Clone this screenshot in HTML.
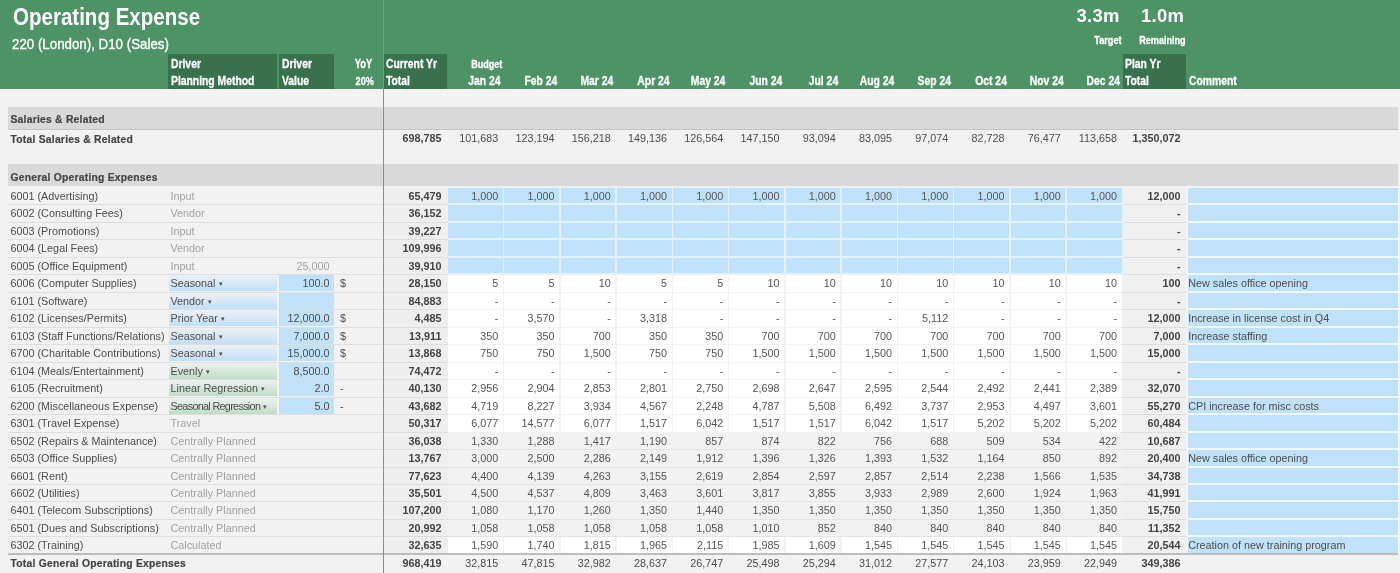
<!DOCTYPE html>
<html><head><meta charset="utf-8"><style>
html,body{margin:0;padding:0;}
body{width:1400px;height:573px;overflow:hidden;position:relative;background:#f1f2f1;font-family:"Liberation Sans",sans-serif;}
body>div{position:absolute;}
body{will-change:transform;}
.t{font-size:10.8px;color:#4d4d4d;white-space:nowrap;}
.b{font-weight:bold;color:#444;}
.bl{font-size:10.3px;letter-spacing:0.25px;}
.g{color:#a2a2a2;}
.m{color:#555;}
.h{font-weight:bold;color:#fff;white-space:nowrap;}
.hn{color:#fff;white-space:nowrap;}
.hs{-webkit-text-stroke:0.3px #fff;}
.bl{-webkit-text-stroke:0.2px #444;}
.dd{font-size:7px;vertical-align:1px;margin-left:3px;}
</style></head><body>
<div style="left:0.00px;top:0.00px;width:1400.00px;height:89.00px;background:#4d9365"></div>
<div style="left:168.00px;top:54.00px;width:109.00px;height:34.50px;background:#38714b"></div>
<div style="left:279.00px;top:54.00px;width:54.50px;height:34.50px;background:#38714b"></div>
<div style="left:384.00px;top:54.00px;width:63.00px;height:34.50px;background:#38714b"></div>
<div style="left:1122.50px;top:54.00px;width:63.50px;height:34.50px;background:#38714b"></div>
<div class="h" style="left:13px;top:0px;font-size:23.3px;line-height:34px;transform:scaleX(0.881);transform-origin:0 0">Operating Expense</div>
<div class="hn" style="left:12px;top:34px;font-size:14.4px;line-height:20px;-webkit-text-stroke:0.35px #fff;transform:scaleX(0.925);transform-origin:0 0">220 (London), D10 (Sales)</div>
<div class="h" style="left:1076.5px;top:3.5px;font-size:18.4px;line-height:24px;letter-spacing:0.3px">3.3m</div>
<div class="h" style="left:1141px;top:3.5px;font-size:18.4px;line-height:24px;letter-spacing:0.3px">1.0m</div>
<div class="h hs" style="right:279px;top:31.7px;font-size:10.9px;line-height:16px;transform:scaleX(0.835);transform-origin:100% 0">Target</div>
<div class="h hs" style="right:214.5px;top:31.7px;font-size:10.9px;line-height:16px;transform:scaleX(0.835);transform-origin:100% 0">Remaining</div>
<div class="h hs" style="left:171px;top:56px;font-size:12.4px;line-height:16px;transform:scaleX(0.835);transform-origin:0 0">Driver</div>
<div class="h hs" style="left:171px;top:73px;font-size:12.4px;line-height:16px;transform:scaleX(0.835);transform-origin:0 0">Planning Method</div>
<div class="h hs" style="left:281.5px;top:56px;font-size:12.4px;line-height:16px;transform:scaleX(0.835);transform-origin:0 0">Driver</div>
<div class="h hs" style="left:281.5px;top:73px;font-size:12.4px;line-height:16px;transform:scaleX(0.835);transform-origin:0 0">Value</div>
<div class="h hs" style="right:1028px;top:56px;font-size:12.4px;line-height:16px;transform:scaleX(0.75);transform-origin:100% 0">YoY</div>
<div class="h hs" style="right:1026.5px;top:73px;font-size:10.9px;line-height:16px;transform:scaleX(0.835);transform-origin:100% 0">20%</div>
<div class="h hs" style="left:386px;top:56px;font-size:12.4px;line-height:16px;transform:scaleX(0.835);transform-origin:0 0">Current Yr</div>
<div class="h hs" style="left:386px;top:73px;font-size:12.4px;line-height:16px;transform:scaleX(0.835);transform-origin:0 0">Total</div>
<div class="h hs" style="right:897.5px;top:55.5px;font-size:10.8px;line-height:16px;transform:scaleX(0.835);transform-origin:100% 0">Budget</div>
<div class="h hs" style="right:899.25px;top:73px;font-size:12.4px;line-height:16px;transform:scaleX(0.835);transform-origin:100% 0">Jan 24</div>
<div class="h hs" style="right:843.0px;top:73px;font-size:12.4px;line-height:16px;transform:scaleX(0.835);transform-origin:100% 0">Feb 24</div>
<div class="h hs" style="right:786.75px;top:73px;font-size:12.4px;line-height:16px;transform:scaleX(0.835);transform-origin:100% 0">Mar 24</div>
<div class="h hs" style="right:730.5px;top:73px;font-size:12.4px;line-height:16px;transform:scaleX(0.835);transform-origin:100% 0">Apr 24</div>
<div class="h hs" style="right:674.25px;top:73px;font-size:12.4px;line-height:16px;transform:scaleX(0.835);transform-origin:100% 0">May 24</div>
<div class="h hs" style="right:618.0px;top:73px;font-size:12.4px;line-height:16px;transform:scaleX(0.835);transform-origin:100% 0">Jun 24</div>
<div class="h hs" style="right:561.75px;top:73px;font-size:12.4px;line-height:16px;transform:scaleX(0.835);transform-origin:100% 0">Jul 24</div>
<div class="h hs" style="right:505.5px;top:73px;font-size:12.4px;line-height:16px;transform:scaleX(0.835);transform-origin:100% 0">Aug 24</div>
<div class="h hs" style="right:449.25px;top:73px;font-size:12.4px;line-height:16px;transform:scaleX(0.835);transform-origin:100% 0">Sep 24</div>
<div class="h hs" style="right:393.0px;top:73px;font-size:12.4px;line-height:16px;transform:scaleX(0.835);transform-origin:100% 0">Oct 24</div>
<div class="h hs" style="right:336.75px;top:73px;font-size:12.4px;line-height:16px;transform:scaleX(0.835);transform-origin:100% 0">Nov 24</div>
<div class="h hs" style="right:280.5px;top:73px;font-size:12.4px;line-height:16px;transform:scaleX(0.835);transform-origin:100% 0">Dec 24</div>
<div class="h hs" style="left:1125px;top:56px;font-size:12.4px;line-height:16px;transform:scaleX(0.835);transform-origin:0 0">Plan Yr</div>
<div class="h hs" style="left:1125px;top:73px;font-size:12.4px;line-height:16px;transform:scaleX(0.835);transform-origin:0 0">Total</div>
<div class="h hs" style="left:1189px;top:73px;font-size:12.4px;line-height:16px;transform:scaleX(0.835);transform-origin:0 0">Comment</div>
<div style="left:8.00px;top:107.00px;width:1390.00px;height:22.00px;background:#d9d9d9;border-bottom:1px solid #c4c4c4"></div>
<div class="t b bl" style="left:10.50px;top:108.50px;width:300.00px;height:22.00px;line-height:22.00px;text-align:left;">Salaries &amp; Related</div>
<div class="t b bl" style="left:10.50px;top:130.70px;width:300.00px;height:17.50px;line-height:17.50px;text-align:left;">Total Salaries &amp; Related</div>
<div class="t b" style="left:384.00px;top:130.00px;width:57.50px;height:17.50px;line-height:17.50px;text-align:right;">698,785</div>
<div class="t " style="left:448.00px;top:130.00px;width:50.25px;height:17.50px;line-height:17.50px;text-align:right;">101,683</div>
<div class="t " style="left:504.25px;top:130.00px;width:50.25px;height:17.50px;line-height:17.50px;text-align:right;">123,194</div>
<div class="t " style="left:560.50px;top:130.00px;width:50.25px;height:17.50px;line-height:17.50px;text-align:right;">156,218</div>
<div class="t " style="left:616.75px;top:130.00px;width:50.25px;height:17.50px;line-height:17.50px;text-align:right;">149,136</div>
<div class="t " style="left:673.00px;top:130.00px;width:50.25px;height:17.50px;line-height:17.50px;text-align:right;">126,564</div>
<div class="t " style="left:729.25px;top:130.00px;width:50.25px;height:17.50px;line-height:17.50px;text-align:right;">147,150</div>
<div class="t " style="left:785.50px;top:130.00px;width:50.25px;height:17.50px;line-height:17.50px;text-align:right;">93,094</div>
<div class="t " style="left:841.75px;top:130.00px;width:50.25px;height:17.50px;line-height:17.50px;text-align:right;">83,095</div>
<div class="t " style="left:898.00px;top:130.00px;width:50.25px;height:17.50px;line-height:17.50px;text-align:right;">97,074</div>
<div class="t " style="left:954.25px;top:130.00px;width:50.25px;height:17.50px;line-height:17.50px;text-align:right;">82,728</div>
<div class="t " style="left:1010.50px;top:130.00px;width:50.25px;height:17.50px;line-height:17.50px;text-align:right;">76,477</div>
<div class="t " style="left:1066.75px;top:130.00px;width:50.25px;height:17.50px;line-height:17.50px;text-align:right;">113,658</div>
<div class="t b" style="left:1121.00px;top:130.00px;width:59.50px;height:17.50px;line-height:17.50px;text-align:right;">1,350,072</div>
<div style="left:8.00px;top:164.00px;width:1390.00px;height:22.00px;background:#d9d9d9"></div>
<div class="t b bl" style="left:10.50px;top:166.70px;width:300.00px;height:22.00px;line-height:22.00px;text-align:left;">General Operating Expenses</div>
<div style="left:8.00px;top:204.47px;width:375.00px;height:1.00px;background:#dedede"></div>
<div style="left:384.00px;top:188.00px;width:63.50px;height:16.47px;background:#eeeeee"></div>
<div style="left:384.00px;top:204.47px;width:63.50px;height:1.00px;background:#dedede"></div>
<div style="left:1121.00px;top:188.00px;width:65.00px;height:16.47px;background:#f0f0f0"></div>
<div style="left:1121.00px;top:204.47px;width:66.00px;height:1.00px;background:#dedede"></div>
<div style="left:448.00px;top:187.00px;width:675.00px;height:18.47px;background:#e4f2fd"></div>
<div style="left:1186.50px;top:187.00px;width:212.00px;height:18.47px;background:#f2f9fe"></div>
<div style="left:448.00px;top:188.00px;width:54.75px;height:15.47px;background:#c0e1fa"></div>
<div class="t m" style="left:448.00px;top:188.00px;width:50.25px;height:17.47px;line-height:17.47px;text-align:right;">1,000</div>
<div style="left:504.25px;top:188.00px;width:54.75px;height:15.47px;background:#c0e1fa"></div>
<div class="t m" style="left:504.25px;top:188.00px;width:50.25px;height:17.47px;line-height:17.47px;text-align:right;">1,000</div>
<div style="left:560.50px;top:188.00px;width:54.75px;height:15.47px;background:#c0e1fa"></div>
<div class="t m" style="left:560.50px;top:188.00px;width:50.25px;height:17.47px;line-height:17.47px;text-align:right;">1,000</div>
<div style="left:616.75px;top:188.00px;width:54.75px;height:15.47px;background:#c0e1fa"></div>
<div class="t m" style="left:616.75px;top:188.00px;width:50.25px;height:17.47px;line-height:17.47px;text-align:right;">1,000</div>
<div style="left:673.00px;top:188.00px;width:54.75px;height:15.47px;background:#c0e1fa"></div>
<div class="t m" style="left:673.00px;top:188.00px;width:50.25px;height:17.47px;line-height:17.47px;text-align:right;">1,000</div>
<div style="left:729.25px;top:188.00px;width:54.75px;height:15.47px;background:#c0e1fa"></div>
<div class="t m" style="left:729.25px;top:188.00px;width:50.25px;height:17.47px;line-height:17.47px;text-align:right;">1,000</div>
<div style="left:785.50px;top:188.00px;width:54.75px;height:15.47px;background:#c0e1fa"></div>
<div class="t m" style="left:785.50px;top:188.00px;width:50.25px;height:17.47px;line-height:17.47px;text-align:right;">1,000</div>
<div style="left:841.75px;top:188.00px;width:54.75px;height:15.47px;background:#c0e1fa"></div>
<div class="t m" style="left:841.75px;top:188.00px;width:50.25px;height:17.47px;line-height:17.47px;text-align:right;">1,000</div>
<div style="left:898.00px;top:188.00px;width:54.75px;height:15.47px;background:#c0e1fa"></div>
<div class="t m" style="left:898.00px;top:188.00px;width:50.25px;height:17.47px;line-height:17.47px;text-align:right;">1,000</div>
<div style="left:954.25px;top:188.00px;width:54.75px;height:15.47px;background:#c0e1fa"></div>
<div class="t m" style="left:954.25px;top:188.00px;width:50.25px;height:17.47px;line-height:17.47px;text-align:right;">1,000</div>
<div style="left:1010.50px;top:188.00px;width:54.75px;height:15.47px;background:#c0e1fa"></div>
<div class="t m" style="left:1010.50px;top:188.00px;width:50.25px;height:17.47px;line-height:17.47px;text-align:right;">1,000</div>
<div style="left:1066.75px;top:188.00px;width:54.75px;height:15.47px;background:#c0e1fa"></div>
<div class="t m" style="left:1066.75px;top:188.00px;width:50.25px;height:17.47px;line-height:17.47px;text-align:right;">1,000</div>
<div style="left:1187.50px;top:188.00px;width:210.50px;height:15.47px;background:#c0e1fa"></div>
<div class="t " style="left:10.50px;top:188.00px;width:160.00px;height:17.47px;line-height:17.47px;text-align:left;">6001 (Advertising)</div>
<div class="t g" style="left:170.50px;top:188.00px;width:108.00px;height:17.47px;line-height:17.47px;text-align:left;">Input</div>
<div class="t b" style="left:384.00px;top:188.00px;width:57.50px;height:17.47px;line-height:17.47px;text-align:right;">65,479</div>
<div class="t b" style="left:1121.00px;top:188.00px;width:59.50px;height:17.47px;line-height:17.47px;text-align:right;">12,000</div>
<div style="left:8.00px;top:221.94px;width:375.00px;height:1.00px;background:#dedede"></div>
<div style="left:384.00px;top:205.47px;width:63.50px;height:16.47px;background:#eeeeee"></div>
<div style="left:384.00px;top:221.94px;width:63.50px;height:1.00px;background:#dedede"></div>
<div style="left:1121.00px;top:205.47px;width:65.00px;height:16.47px;background:#f0f0f0"></div>
<div style="left:1121.00px;top:221.94px;width:66.00px;height:1.00px;background:#dedede"></div>
<div style="left:448.00px;top:204.47px;width:675.00px;height:18.47px;background:#e4f2fd"></div>
<div style="left:1186.50px;top:204.47px;width:212.00px;height:18.47px;background:#f2f9fe"></div>
<div style="left:448.00px;top:205.47px;width:54.75px;height:15.47px;background:#c0e1fa"></div>
<div style="left:504.25px;top:205.47px;width:54.75px;height:15.47px;background:#c0e1fa"></div>
<div style="left:560.50px;top:205.47px;width:54.75px;height:15.47px;background:#c0e1fa"></div>
<div style="left:616.75px;top:205.47px;width:54.75px;height:15.47px;background:#c0e1fa"></div>
<div style="left:673.00px;top:205.47px;width:54.75px;height:15.47px;background:#c0e1fa"></div>
<div style="left:729.25px;top:205.47px;width:54.75px;height:15.47px;background:#c0e1fa"></div>
<div style="left:785.50px;top:205.47px;width:54.75px;height:15.47px;background:#c0e1fa"></div>
<div style="left:841.75px;top:205.47px;width:54.75px;height:15.47px;background:#c0e1fa"></div>
<div style="left:898.00px;top:205.47px;width:54.75px;height:15.47px;background:#c0e1fa"></div>
<div style="left:954.25px;top:205.47px;width:54.75px;height:15.47px;background:#c0e1fa"></div>
<div style="left:1010.50px;top:205.47px;width:54.75px;height:15.47px;background:#c0e1fa"></div>
<div style="left:1066.75px;top:205.47px;width:54.75px;height:15.47px;background:#c0e1fa"></div>
<div style="left:1187.50px;top:205.47px;width:210.50px;height:15.47px;background:#c0e1fa"></div>
<div class="t " style="left:10.50px;top:205.47px;width:160.00px;height:17.47px;line-height:17.47px;text-align:left;">6002 (Consulting Fees)</div>
<div class="t g" style="left:170.50px;top:205.47px;width:108.00px;height:17.47px;line-height:17.47px;text-align:left;">Vendor</div>
<div class="t b" style="left:384.00px;top:205.47px;width:57.50px;height:17.47px;line-height:17.47px;text-align:right;">36,152</div>
<div class="t b" style="left:1121.00px;top:205.47px;width:59.50px;height:17.47px;line-height:17.47px;text-align:right;">-</div>
<div style="left:8.00px;top:239.41px;width:375.00px;height:1.00px;background:#dedede"></div>
<div style="left:384.00px;top:222.94px;width:63.50px;height:16.47px;background:#eeeeee"></div>
<div style="left:384.00px;top:239.41px;width:63.50px;height:1.00px;background:#dedede"></div>
<div style="left:1121.00px;top:222.94px;width:65.00px;height:16.47px;background:#f0f0f0"></div>
<div style="left:1121.00px;top:239.41px;width:66.00px;height:1.00px;background:#dedede"></div>
<div style="left:448.00px;top:221.94px;width:675.00px;height:18.47px;background:#e4f2fd"></div>
<div style="left:1186.50px;top:221.94px;width:212.00px;height:18.47px;background:#f2f9fe"></div>
<div style="left:448.00px;top:222.94px;width:54.75px;height:15.47px;background:#c0e1fa"></div>
<div style="left:504.25px;top:222.94px;width:54.75px;height:15.47px;background:#c0e1fa"></div>
<div style="left:560.50px;top:222.94px;width:54.75px;height:15.47px;background:#c0e1fa"></div>
<div style="left:616.75px;top:222.94px;width:54.75px;height:15.47px;background:#c0e1fa"></div>
<div style="left:673.00px;top:222.94px;width:54.75px;height:15.47px;background:#c0e1fa"></div>
<div style="left:729.25px;top:222.94px;width:54.75px;height:15.47px;background:#c0e1fa"></div>
<div style="left:785.50px;top:222.94px;width:54.75px;height:15.47px;background:#c0e1fa"></div>
<div style="left:841.75px;top:222.94px;width:54.75px;height:15.47px;background:#c0e1fa"></div>
<div style="left:898.00px;top:222.94px;width:54.75px;height:15.47px;background:#c0e1fa"></div>
<div style="left:954.25px;top:222.94px;width:54.75px;height:15.47px;background:#c0e1fa"></div>
<div style="left:1010.50px;top:222.94px;width:54.75px;height:15.47px;background:#c0e1fa"></div>
<div style="left:1066.75px;top:222.94px;width:54.75px;height:15.47px;background:#c0e1fa"></div>
<div style="left:1187.50px;top:222.94px;width:210.50px;height:15.47px;background:#c0e1fa"></div>
<div class="t " style="left:10.50px;top:222.94px;width:160.00px;height:17.47px;line-height:17.47px;text-align:left;">6003 (Promotions)</div>
<div class="t g" style="left:170.50px;top:222.94px;width:108.00px;height:17.47px;line-height:17.47px;text-align:left;">Input</div>
<div class="t b" style="left:384.00px;top:222.94px;width:57.50px;height:17.47px;line-height:17.47px;text-align:right;">39,227</div>
<div class="t b" style="left:1121.00px;top:222.94px;width:59.50px;height:17.47px;line-height:17.47px;text-align:right;">-</div>
<div style="left:8.00px;top:256.88px;width:375.00px;height:1.00px;background:#dedede"></div>
<div style="left:384.00px;top:240.41px;width:63.50px;height:16.47px;background:#eeeeee"></div>
<div style="left:384.00px;top:256.88px;width:63.50px;height:1.00px;background:#dedede"></div>
<div style="left:1121.00px;top:240.41px;width:65.00px;height:16.47px;background:#f0f0f0"></div>
<div style="left:1121.00px;top:256.88px;width:66.00px;height:1.00px;background:#dedede"></div>
<div style="left:448.00px;top:239.41px;width:675.00px;height:18.47px;background:#e4f2fd"></div>
<div style="left:1186.50px;top:239.41px;width:212.00px;height:18.47px;background:#f2f9fe"></div>
<div style="left:448.00px;top:240.41px;width:54.75px;height:15.47px;background:#c0e1fa"></div>
<div style="left:504.25px;top:240.41px;width:54.75px;height:15.47px;background:#c0e1fa"></div>
<div style="left:560.50px;top:240.41px;width:54.75px;height:15.47px;background:#c0e1fa"></div>
<div style="left:616.75px;top:240.41px;width:54.75px;height:15.47px;background:#c0e1fa"></div>
<div style="left:673.00px;top:240.41px;width:54.75px;height:15.47px;background:#c0e1fa"></div>
<div style="left:729.25px;top:240.41px;width:54.75px;height:15.47px;background:#c0e1fa"></div>
<div style="left:785.50px;top:240.41px;width:54.75px;height:15.47px;background:#c0e1fa"></div>
<div style="left:841.75px;top:240.41px;width:54.75px;height:15.47px;background:#c0e1fa"></div>
<div style="left:898.00px;top:240.41px;width:54.75px;height:15.47px;background:#c0e1fa"></div>
<div style="left:954.25px;top:240.41px;width:54.75px;height:15.47px;background:#c0e1fa"></div>
<div style="left:1010.50px;top:240.41px;width:54.75px;height:15.47px;background:#c0e1fa"></div>
<div style="left:1066.75px;top:240.41px;width:54.75px;height:15.47px;background:#c0e1fa"></div>
<div style="left:1187.50px;top:240.41px;width:210.50px;height:15.47px;background:#c0e1fa"></div>
<div class="t " style="left:10.50px;top:240.41px;width:160.00px;height:17.47px;line-height:17.47px;text-align:left;">6004 (Legal Fees)</div>
<div class="t g" style="left:170.50px;top:240.41px;width:108.00px;height:17.47px;line-height:17.47px;text-align:left;">Vendor</div>
<div class="t b" style="left:384.00px;top:240.41px;width:57.50px;height:17.47px;line-height:17.47px;text-align:right;">109,996</div>
<div class="t b" style="left:1121.00px;top:240.41px;width:59.50px;height:17.47px;line-height:17.47px;text-align:right;">-</div>
<div style="left:8.00px;top:274.35px;width:375.00px;height:1.00px;background:#dedede"></div>
<div style="left:384.00px;top:257.88px;width:63.50px;height:16.47px;background:#eeeeee"></div>
<div style="left:384.00px;top:274.35px;width:63.50px;height:1.00px;background:#dedede"></div>
<div style="left:1121.00px;top:257.88px;width:65.00px;height:16.47px;background:#f0f0f0"></div>
<div style="left:1121.00px;top:274.35px;width:66.00px;height:1.00px;background:#dedede"></div>
<div style="left:448.00px;top:256.88px;width:675.00px;height:18.47px;background:#e4f2fd"></div>
<div style="left:1186.50px;top:256.88px;width:212.00px;height:18.47px;background:#f2f9fe"></div>
<div style="left:448.00px;top:257.88px;width:54.75px;height:15.47px;background:#c0e1fa"></div>
<div style="left:504.25px;top:257.88px;width:54.75px;height:15.47px;background:#c0e1fa"></div>
<div style="left:560.50px;top:257.88px;width:54.75px;height:15.47px;background:#c0e1fa"></div>
<div style="left:616.75px;top:257.88px;width:54.75px;height:15.47px;background:#c0e1fa"></div>
<div style="left:673.00px;top:257.88px;width:54.75px;height:15.47px;background:#c0e1fa"></div>
<div style="left:729.25px;top:257.88px;width:54.75px;height:15.47px;background:#c0e1fa"></div>
<div style="left:785.50px;top:257.88px;width:54.75px;height:15.47px;background:#c0e1fa"></div>
<div style="left:841.75px;top:257.88px;width:54.75px;height:15.47px;background:#c0e1fa"></div>
<div style="left:898.00px;top:257.88px;width:54.75px;height:15.47px;background:#c0e1fa"></div>
<div style="left:954.25px;top:257.88px;width:54.75px;height:15.47px;background:#c0e1fa"></div>
<div style="left:1010.50px;top:257.88px;width:54.75px;height:15.47px;background:#c0e1fa"></div>
<div style="left:1066.75px;top:257.88px;width:54.75px;height:15.47px;background:#c0e1fa"></div>
<div style="left:1187.50px;top:257.88px;width:210.50px;height:15.47px;background:#c0e1fa"></div>
<div class="t " style="left:10.50px;top:257.88px;width:160.00px;height:17.47px;line-height:17.47px;text-align:left;">6005 (Office Equipment)</div>
<div class="t g" style="left:170.50px;top:257.88px;width:108.00px;height:17.47px;line-height:17.47px;text-align:left;">Input</div>
<div class="t g" style="left:279.00px;top:257.88px;width:50.50px;height:17.47px;line-height:17.47px;text-align:right;">25,000</div>
<div class="t b" style="left:384.00px;top:257.88px;width:57.50px;height:17.47px;line-height:17.47px;text-align:right;">39,910</div>
<div class="t b" style="left:1121.00px;top:257.88px;width:59.50px;height:17.47px;line-height:17.47px;text-align:right;">-</div>
<div style="left:8.00px;top:291.82px;width:375.00px;height:1.00px;background:#dedede"></div>
<div style="left:384.00px;top:275.35px;width:63.50px;height:16.47px;background:#eeeeee"></div>
<div style="left:384.00px;top:291.82px;width:63.50px;height:1.00px;background:#dedede"></div>
<div style="left:1121.00px;top:275.35px;width:65.00px;height:16.47px;background:#f0f0f0"></div>
<div style="left:1121.00px;top:291.82px;width:66.00px;height:1.00px;background:#dedede"></div>
<div style="left:1186.50px;top:274.35px;width:212.00px;height:18.47px;background:#f2f9fe"></div>
<div style="left:448.00px;top:275.35px;width:54.75px;height:16.47px;background:#ffffff"></div>
<div class="t m" style="left:448.00px;top:275.35px;width:50.25px;height:17.47px;line-height:17.47px;text-align:right;">5</div>
<div style="left:504.25px;top:275.35px;width:54.75px;height:16.47px;background:#ffffff"></div>
<div class="t m" style="left:504.25px;top:275.35px;width:50.25px;height:17.47px;line-height:17.47px;text-align:right;">5</div>
<div style="left:560.50px;top:275.35px;width:54.75px;height:16.47px;background:#ffffff"></div>
<div class="t m" style="left:560.50px;top:275.35px;width:50.25px;height:17.47px;line-height:17.47px;text-align:right;">10</div>
<div style="left:616.75px;top:275.35px;width:54.75px;height:16.47px;background:#ffffff"></div>
<div class="t m" style="left:616.75px;top:275.35px;width:50.25px;height:17.47px;line-height:17.47px;text-align:right;">5</div>
<div style="left:673.00px;top:275.35px;width:54.75px;height:16.47px;background:#ffffff"></div>
<div class="t m" style="left:673.00px;top:275.35px;width:50.25px;height:17.47px;line-height:17.47px;text-align:right;">5</div>
<div style="left:729.25px;top:275.35px;width:54.75px;height:16.47px;background:#ffffff"></div>
<div class="t m" style="left:729.25px;top:275.35px;width:50.25px;height:17.47px;line-height:17.47px;text-align:right;">10</div>
<div style="left:785.50px;top:275.35px;width:54.75px;height:16.47px;background:#ffffff"></div>
<div class="t m" style="left:785.50px;top:275.35px;width:50.25px;height:17.47px;line-height:17.47px;text-align:right;">10</div>
<div style="left:841.75px;top:275.35px;width:54.75px;height:16.47px;background:#ffffff"></div>
<div class="t m" style="left:841.75px;top:275.35px;width:50.25px;height:17.47px;line-height:17.47px;text-align:right;">10</div>
<div style="left:898.00px;top:275.35px;width:54.75px;height:16.47px;background:#ffffff"></div>
<div class="t m" style="left:898.00px;top:275.35px;width:50.25px;height:17.47px;line-height:17.47px;text-align:right;">10</div>
<div style="left:954.25px;top:275.35px;width:54.75px;height:16.47px;background:#ffffff"></div>
<div class="t m" style="left:954.25px;top:275.35px;width:50.25px;height:17.47px;line-height:17.47px;text-align:right;">10</div>
<div style="left:1010.50px;top:275.35px;width:54.75px;height:16.47px;background:#ffffff"></div>
<div class="t m" style="left:1010.50px;top:275.35px;width:50.25px;height:17.47px;line-height:17.47px;text-align:right;">10</div>
<div style="left:1066.75px;top:275.35px;width:54.75px;height:16.47px;background:#ffffff"></div>
<div class="t m" style="left:1066.75px;top:275.35px;width:50.25px;height:17.47px;line-height:17.47px;text-align:right;">10</div>
<div style="left:1187.50px;top:275.35px;width:210.50px;height:15.47px;background:#c0e1fa"></div>
<div class="t " style="left:1188.20px;top:275.35px;width:210.00px;height:17.47px;line-height:17.47px;text-align:left;">New sales office opening</div>
<div style="left:168.50px;top:275.35px;width:108.50px;height:15.97px;background:linear-gradient(#edf1f4,#c0dff8)"></div>
<div style="left:279.00px;top:275.35px;width:54.50px;height:15.97px;background:#c0e1fa"></div>
<div class="t " style="left:10.50px;top:275.35px;width:160.00px;height:17.47px;line-height:17.47px;text-align:left;">6006 (Computer Supplies)</div>
<div class="t " style="left:170.50px;top:275.35px;width:108.00px;height:17.47px;line-height:17.47px;text-align:left;">Seasonal<span class="dd">&#9662;</span></div>
<div class="t " style="left:279.00px;top:275.35px;width:50.50px;height:17.47px;line-height:17.47px;text-align:right;">100.0</div>
<div class="t " style="left:340.00px;top:275.35px;width:30.00px;height:17.47px;line-height:17.47px;text-align:left;">$</div>
<div class="t b" style="left:384.00px;top:275.35px;width:57.50px;height:17.47px;line-height:17.47px;text-align:right;">28,150</div>
<div class="t b" style="left:1121.00px;top:275.35px;width:59.50px;height:17.47px;line-height:17.47px;text-align:right;">100</div>
<div style="left:8.00px;top:309.29px;width:375.00px;height:1.00px;background:#dedede"></div>
<div style="left:384.00px;top:292.82px;width:63.50px;height:16.47px;background:#eeeeee"></div>
<div style="left:384.00px;top:309.29px;width:63.50px;height:1.00px;background:#dedede"></div>
<div style="left:1121.00px;top:292.82px;width:65.00px;height:16.47px;background:#f0f0f0"></div>
<div style="left:1121.00px;top:309.29px;width:66.00px;height:1.00px;background:#dedede"></div>
<div style="left:1186.50px;top:291.82px;width:212.00px;height:18.47px;background:#f2f9fe"></div>
<div style="left:448.00px;top:292.82px;width:54.75px;height:16.47px;background:#ffffff"></div>
<div class="t m" style="left:448.00px;top:292.82px;width:50.25px;height:17.47px;line-height:17.47px;text-align:right;">-</div>
<div style="left:504.25px;top:292.82px;width:54.75px;height:16.47px;background:#ffffff"></div>
<div class="t m" style="left:504.25px;top:292.82px;width:50.25px;height:17.47px;line-height:17.47px;text-align:right;">-</div>
<div style="left:560.50px;top:292.82px;width:54.75px;height:16.47px;background:#ffffff"></div>
<div class="t m" style="left:560.50px;top:292.82px;width:50.25px;height:17.47px;line-height:17.47px;text-align:right;">-</div>
<div style="left:616.75px;top:292.82px;width:54.75px;height:16.47px;background:#ffffff"></div>
<div class="t m" style="left:616.75px;top:292.82px;width:50.25px;height:17.47px;line-height:17.47px;text-align:right;">-</div>
<div style="left:673.00px;top:292.82px;width:54.75px;height:16.47px;background:#ffffff"></div>
<div class="t m" style="left:673.00px;top:292.82px;width:50.25px;height:17.47px;line-height:17.47px;text-align:right;">-</div>
<div style="left:729.25px;top:292.82px;width:54.75px;height:16.47px;background:#ffffff"></div>
<div class="t m" style="left:729.25px;top:292.82px;width:50.25px;height:17.47px;line-height:17.47px;text-align:right;">-</div>
<div style="left:785.50px;top:292.82px;width:54.75px;height:16.47px;background:#ffffff"></div>
<div class="t m" style="left:785.50px;top:292.82px;width:50.25px;height:17.47px;line-height:17.47px;text-align:right;">-</div>
<div style="left:841.75px;top:292.82px;width:54.75px;height:16.47px;background:#ffffff"></div>
<div class="t m" style="left:841.75px;top:292.82px;width:50.25px;height:17.47px;line-height:17.47px;text-align:right;">-</div>
<div style="left:898.00px;top:292.82px;width:54.75px;height:16.47px;background:#ffffff"></div>
<div class="t m" style="left:898.00px;top:292.82px;width:50.25px;height:17.47px;line-height:17.47px;text-align:right;">-</div>
<div style="left:954.25px;top:292.82px;width:54.75px;height:16.47px;background:#ffffff"></div>
<div class="t m" style="left:954.25px;top:292.82px;width:50.25px;height:17.47px;line-height:17.47px;text-align:right;">-</div>
<div style="left:1010.50px;top:292.82px;width:54.75px;height:16.47px;background:#ffffff"></div>
<div class="t m" style="left:1010.50px;top:292.82px;width:50.25px;height:17.47px;line-height:17.47px;text-align:right;">-</div>
<div style="left:1066.75px;top:292.82px;width:54.75px;height:16.47px;background:#ffffff"></div>
<div class="t m" style="left:1066.75px;top:292.82px;width:50.25px;height:17.47px;line-height:17.47px;text-align:right;">-</div>
<div style="left:1187.50px;top:292.82px;width:210.50px;height:15.47px;background:#c0e1fa"></div>
<div style="left:168.50px;top:292.82px;width:108.50px;height:15.97px;background:linear-gradient(#edf1f4,#c0dff8)"></div>
<div style="left:279.00px;top:292.82px;width:54.50px;height:15.97px;background:#c0e1fa"></div>
<div class="t " style="left:10.50px;top:292.82px;width:160.00px;height:17.47px;line-height:17.47px;text-align:left;">6101 (Software)</div>
<div class="t " style="left:170.50px;top:292.82px;width:108.00px;height:17.47px;line-height:17.47px;text-align:left;">Vendor<span class="dd">&#9662;</span></div>
<div class="t b" style="left:384.00px;top:292.82px;width:57.50px;height:17.47px;line-height:17.47px;text-align:right;">84,883</div>
<div class="t b" style="left:1121.00px;top:292.82px;width:59.50px;height:17.47px;line-height:17.47px;text-align:right;">-</div>
<div style="left:8.00px;top:326.76px;width:375.00px;height:1.00px;background:#dedede"></div>
<div style="left:384.00px;top:310.29px;width:63.50px;height:16.47px;background:#eeeeee"></div>
<div style="left:384.00px;top:326.76px;width:63.50px;height:1.00px;background:#dedede"></div>
<div style="left:1121.00px;top:310.29px;width:65.00px;height:16.47px;background:#f0f0f0"></div>
<div style="left:1121.00px;top:326.76px;width:66.00px;height:1.00px;background:#dedede"></div>
<div style="left:1186.50px;top:309.29px;width:212.00px;height:18.47px;background:#f2f9fe"></div>
<div style="left:448.00px;top:310.29px;width:54.75px;height:16.47px;background:#ffffff"></div>
<div class="t m" style="left:448.00px;top:310.29px;width:50.25px;height:17.47px;line-height:17.47px;text-align:right;">-</div>
<div style="left:504.25px;top:310.29px;width:54.75px;height:16.47px;background:#ffffff"></div>
<div class="t m" style="left:504.25px;top:310.29px;width:50.25px;height:17.47px;line-height:17.47px;text-align:right;">3,570</div>
<div style="left:560.50px;top:310.29px;width:54.75px;height:16.47px;background:#ffffff"></div>
<div class="t m" style="left:560.50px;top:310.29px;width:50.25px;height:17.47px;line-height:17.47px;text-align:right;">-</div>
<div style="left:616.75px;top:310.29px;width:54.75px;height:16.47px;background:#ffffff"></div>
<div class="t m" style="left:616.75px;top:310.29px;width:50.25px;height:17.47px;line-height:17.47px;text-align:right;">3,318</div>
<div style="left:673.00px;top:310.29px;width:54.75px;height:16.47px;background:#ffffff"></div>
<div class="t m" style="left:673.00px;top:310.29px;width:50.25px;height:17.47px;line-height:17.47px;text-align:right;">-</div>
<div style="left:729.25px;top:310.29px;width:54.75px;height:16.47px;background:#ffffff"></div>
<div class="t m" style="left:729.25px;top:310.29px;width:50.25px;height:17.47px;line-height:17.47px;text-align:right;">-</div>
<div style="left:785.50px;top:310.29px;width:54.75px;height:16.47px;background:#ffffff"></div>
<div class="t m" style="left:785.50px;top:310.29px;width:50.25px;height:17.47px;line-height:17.47px;text-align:right;">-</div>
<div style="left:841.75px;top:310.29px;width:54.75px;height:16.47px;background:#ffffff"></div>
<div class="t m" style="left:841.75px;top:310.29px;width:50.25px;height:17.47px;line-height:17.47px;text-align:right;">-</div>
<div style="left:898.00px;top:310.29px;width:54.75px;height:16.47px;background:#ffffff"></div>
<div class="t m" style="left:898.00px;top:310.29px;width:50.25px;height:17.47px;line-height:17.47px;text-align:right;">5,112</div>
<div style="left:954.25px;top:310.29px;width:54.75px;height:16.47px;background:#ffffff"></div>
<div class="t m" style="left:954.25px;top:310.29px;width:50.25px;height:17.47px;line-height:17.47px;text-align:right;">-</div>
<div style="left:1010.50px;top:310.29px;width:54.75px;height:16.47px;background:#ffffff"></div>
<div class="t m" style="left:1010.50px;top:310.29px;width:50.25px;height:17.47px;line-height:17.47px;text-align:right;">-</div>
<div style="left:1066.75px;top:310.29px;width:54.75px;height:16.47px;background:#ffffff"></div>
<div class="t m" style="left:1066.75px;top:310.29px;width:50.25px;height:17.47px;line-height:17.47px;text-align:right;">-</div>
<div style="left:1187.50px;top:310.29px;width:210.50px;height:15.47px;background:#c0e1fa"></div>
<div class="t " style="left:1188.20px;top:310.29px;width:210.00px;height:17.47px;line-height:17.47px;text-align:left;">Increase in license cost in Q4</div>
<div style="left:168.50px;top:310.29px;width:108.50px;height:15.97px;background:linear-gradient(#edf1f4,#c0dff8)"></div>
<div style="left:279.00px;top:310.29px;width:54.50px;height:15.97px;background:#c0e1fa"></div>
<div class="t " style="left:10.50px;top:310.29px;width:160.00px;height:17.47px;line-height:17.47px;text-align:left;">6102 (Licenses/Permits)</div>
<div class="t " style="left:170.50px;top:310.29px;width:108.00px;height:17.47px;line-height:17.47px;text-align:left;">Prior Year<span class="dd">&#9662;</span></div>
<div class="t " style="left:279.00px;top:310.29px;width:50.50px;height:17.47px;line-height:17.47px;text-align:right;">12,000.0</div>
<div class="t " style="left:340.00px;top:310.29px;width:30.00px;height:17.47px;line-height:17.47px;text-align:left;">$</div>
<div class="t b" style="left:384.00px;top:310.29px;width:57.50px;height:17.47px;line-height:17.47px;text-align:right;">4,485</div>
<div class="t b" style="left:1121.00px;top:310.29px;width:59.50px;height:17.47px;line-height:17.47px;text-align:right;">12,000</div>
<div style="left:8.00px;top:344.23px;width:375.00px;height:1.00px;background:#dedede"></div>
<div style="left:384.00px;top:327.76px;width:63.50px;height:16.47px;background:#eeeeee"></div>
<div style="left:384.00px;top:344.23px;width:63.50px;height:1.00px;background:#dedede"></div>
<div style="left:1121.00px;top:327.76px;width:65.00px;height:16.47px;background:#f0f0f0"></div>
<div style="left:1121.00px;top:344.23px;width:66.00px;height:1.00px;background:#dedede"></div>
<div style="left:1186.50px;top:326.76px;width:212.00px;height:18.47px;background:#f2f9fe"></div>
<div style="left:448.00px;top:327.76px;width:54.75px;height:16.47px;background:#ffffff"></div>
<div class="t m" style="left:448.00px;top:327.76px;width:50.25px;height:17.47px;line-height:17.47px;text-align:right;">350</div>
<div style="left:504.25px;top:327.76px;width:54.75px;height:16.47px;background:#ffffff"></div>
<div class="t m" style="left:504.25px;top:327.76px;width:50.25px;height:17.47px;line-height:17.47px;text-align:right;">350</div>
<div style="left:560.50px;top:327.76px;width:54.75px;height:16.47px;background:#ffffff"></div>
<div class="t m" style="left:560.50px;top:327.76px;width:50.25px;height:17.47px;line-height:17.47px;text-align:right;">700</div>
<div style="left:616.75px;top:327.76px;width:54.75px;height:16.47px;background:#ffffff"></div>
<div class="t m" style="left:616.75px;top:327.76px;width:50.25px;height:17.47px;line-height:17.47px;text-align:right;">350</div>
<div style="left:673.00px;top:327.76px;width:54.75px;height:16.47px;background:#ffffff"></div>
<div class="t m" style="left:673.00px;top:327.76px;width:50.25px;height:17.47px;line-height:17.47px;text-align:right;">350</div>
<div style="left:729.25px;top:327.76px;width:54.75px;height:16.47px;background:#ffffff"></div>
<div class="t m" style="left:729.25px;top:327.76px;width:50.25px;height:17.47px;line-height:17.47px;text-align:right;">700</div>
<div style="left:785.50px;top:327.76px;width:54.75px;height:16.47px;background:#ffffff"></div>
<div class="t m" style="left:785.50px;top:327.76px;width:50.25px;height:17.47px;line-height:17.47px;text-align:right;">700</div>
<div style="left:841.75px;top:327.76px;width:54.75px;height:16.47px;background:#ffffff"></div>
<div class="t m" style="left:841.75px;top:327.76px;width:50.25px;height:17.47px;line-height:17.47px;text-align:right;">700</div>
<div style="left:898.00px;top:327.76px;width:54.75px;height:16.47px;background:#ffffff"></div>
<div class="t m" style="left:898.00px;top:327.76px;width:50.25px;height:17.47px;line-height:17.47px;text-align:right;">700</div>
<div style="left:954.25px;top:327.76px;width:54.75px;height:16.47px;background:#ffffff"></div>
<div class="t m" style="left:954.25px;top:327.76px;width:50.25px;height:17.47px;line-height:17.47px;text-align:right;">700</div>
<div style="left:1010.50px;top:327.76px;width:54.75px;height:16.47px;background:#ffffff"></div>
<div class="t m" style="left:1010.50px;top:327.76px;width:50.25px;height:17.47px;line-height:17.47px;text-align:right;">700</div>
<div style="left:1066.75px;top:327.76px;width:54.75px;height:16.47px;background:#ffffff"></div>
<div class="t m" style="left:1066.75px;top:327.76px;width:50.25px;height:17.47px;line-height:17.47px;text-align:right;">700</div>
<div style="left:1187.50px;top:327.76px;width:210.50px;height:15.47px;background:#c0e1fa"></div>
<div class="t " style="left:1188.20px;top:327.76px;width:210.00px;height:17.47px;line-height:17.47px;text-align:left;">Increase staffing</div>
<div style="left:168.50px;top:327.76px;width:108.50px;height:15.97px;background:linear-gradient(#edf1f4,#c0dff8)"></div>
<div style="left:279.00px;top:327.76px;width:54.50px;height:15.97px;background:#c0e1fa"></div>
<div class="t " style="left:10.50px;top:327.76px;width:160.00px;height:17.47px;line-height:17.47px;text-align:left;">6103 (Staff Functions/Relations)</div>
<div class="t " style="left:170.50px;top:327.76px;width:108.00px;height:17.47px;line-height:17.47px;text-align:left;">Seasonal<span class="dd">&#9662;</span></div>
<div class="t " style="left:279.00px;top:327.76px;width:50.50px;height:17.47px;line-height:17.47px;text-align:right;">7,000.0</div>
<div class="t " style="left:340.00px;top:327.76px;width:30.00px;height:17.47px;line-height:17.47px;text-align:left;">$</div>
<div class="t b" style="left:384.00px;top:327.76px;width:57.50px;height:17.47px;line-height:17.47px;text-align:right;">13,911</div>
<div class="t b" style="left:1121.00px;top:327.76px;width:59.50px;height:17.47px;line-height:17.47px;text-align:right;">7,000</div>
<div style="left:8.00px;top:361.70px;width:375.00px;height:1.00px;background:#dedede"></div>
<div style="left:384.00px;top:345.23px;width:63.50px;height:16.47px;background:#eeeeee"></div>
<div style="left:384.00px;top:361.70px;width:63.50px;height:1.00px;background:#dedede"></div>
<div style="left:1121.00px;top:345.23px;width:65.00px;height:16.47px;background:#f0f0f0"></div>
<div style="left:1121.00px;top:361.70px;width:66.00px;height:1.00px;background:#dedede"></div>
<div style="left:1186.50px;top:344.23px;width:212.00px;height:18.47px;background:#f2f9fe"></div>
<div style="left:448.00px;top:345.23px;width:54.75px;height:16.47px;background:#ffffff"></div>
<div class="t m" style="left:448.00px;top:345.23px;width:50.25px;height:17.47px;line-height:17.47px;text-align:right;">750</div>
<div style="left:504.25px;top:345.23px;width:54.75px;height:16.47px;background:#ffffff"></div>
<div class="t m" style="left:504.25px;top:345.23px;width:50.25px;height:17.47px;line-height:17.47px;text-align:right;">750</div>
<div style="left:560.50px;top:345.23px;width:54.75px;height:16.47px;background:#ffffff"></div>
<div class="t m" style="left:560.50px;top:345.23px;width:50.25px;height:17.47px;line-height:17.47px;text-align:right;">1,500</div>
<div style="left:616.75px;top:345.23px;width:54.75px;height:16.47px;background:#ffffff"></div>
<div class="t m" style="left:616.75px;top:345.23px;width:50.25px;height:17.47px;line-height:17.47px;text-align:right;">750</div>
<div style="left:673.00px;top:345.23px;width:54.75px;height:16.47px;background:#ffffff"></div>
<div class="t m" style="left:673.00px;top:345.23px;width:50.25px;height:17.47px;line-height:17.47px;text-align:right;">750</div>
<div style="left:729.25px;top:345.23px;width:54.75px;height:16.47px;background:#ffffff"></div>
<div class="t m" style="left:729.25px;top:345.23px;width:50.25px;height:17.47px;line-height:17.47px;text-align:right;">1,500</div>
<div style="left:785.50px;top:345.23px;width:54.75px;height:16.47px;background:#ffffff"></div>
<div class="t m" style="left:785.50px;top:345.23px;width:50.25px;height:17.47px;line-height:17.47px;text-align:right;">1,500</div>
<div style="left:841.75px;top:345.23px;width:54.75px;height:16.47px;background:#ffffff"></div>
<div class="t m" style="left:841.75px;top:345.23px;width:50.25px;height:17.47px;line-height:17.47px;text-align:right;">1,500</div>
<div style="left:898.00px;top:345.23px;width:54.75px;height:16.47px;background:#ffffff"></div>
<div class="t m" style="left:898.00px;top:345.23px;width:50.25px;height:17.47px;line-height:17.47px;text-align:right;">1,500</div>
<div style="left:954.25px;top:345.23px;width:54.75px;height:16.47px;background:#ffffff"></div>
<div class="t m" style="left:954.25px;top:345.23px;width:50.25px;height:17.47px;line-height:17.47px;text-align:right;">1,500</div>
<div style="left:1010.50px;top:345.23px;width:54.75px;height:16.47px;background:#ffffff"></div>
<div class="t m" style="left:1010.50px;top:345.23px;width:50.25px;height:17.47px;line-height:17.47px;text-align:right;">1,500</div>
<div style="left:1066.75px;top:345.23px;width:54.75px;height:16.47px;background:#ffffff"></div>
<div class="t m" style="left:1066.75px;top:345.23px;width:50.25px;height:17.47px;line-height:17.47px;text-align:right;">1,500</div>
<div style="left:1187.50px;top:345.23px;width:210.50px;height:15.47px;background:#c0e1fa"></div>
<div style="left:168.50px;top:345.23px;width:108.50px;height:15.97px;background:linear-gradient(#edf1f4,#c0dff8)"></div>
<div style="left:279.00px;top:345.23px;width:54.50px;height:15.97px;background:#c0e1fa"></div>
<div class="t " style="left:10.50px;top:345.23px;width:160.00px;height:17.47px;line-height:17.47px;text-align:left;">6700 (Charitable Contributions)</div>
<div class="t " style="left:170.50px;top:345.23px;width:108.00px;height:17.47px;line-height:17.47px;text-align:left;">Seasonal<span class="dd">&#9662;</span></div>
<div class="t " style="left:279.00px;top:345.23px;width:50.50px;height:17.47px;line-height:17.47px;text-align:right;">15,000.0</div>
<div class="t " style="left:340.00px;top:345.23px;width:30.00px;height:17.47px;line-height:17.47px;text-align:left;">$</div>
<div class="t b" style="left:384.00px;top:345.23px;width:57.50px;height:17.47px;line-height:17.47px;text-align:right;">13,868</div>
<div class="t b" style="left:1121.00px;top:345.23px;width:59.50px;height:17.47px;line-height:17.47px;text-align:right;">15,000</div>
<div style="left:8.00px;top:379.17px;width:375.00px;height:1.00px;background:#dedede"></div>
<div style="left:384.00px;top:362.70px;width:63.50px;height:16.47px;background:#eeeeee"></div>
<div style="left:384.00px;top:379.17px;width:63.50px;height:1.00px;background:#dedede"></div>
<div style="left:1121.00px;top:362.70px;width:65.00px;height:16.47px;background:#f0f0f0"></div>
<div style="left:1121.00px;top:379.17px;width:66.00px;height:1.00px;background:#dedede"></div>
<div style="left:1186.50px;top:361.70px;width:212.00px;height:18.47px;background:#f2f9fe"></div>
<div style="left:448.00px;top:362.70px;width:54.75px;height:16.47px;background:#ffffff"></div>
<div class="t m" style="left:448.00px;top:362.70px;width:50.25px;height:17.47px;line-height:17.47px;text-align:right;">-</div>
<div style="left:504.25px;top:362.70px;width:54.75px;height:16.47px;background:#ffffff"></div>
<div class="t m" style="left:504.25px;top:362.70px;width:50.25px;height:17.47px;line-height:17.47px;text-align:right;">-</div>
<div style="left:560.50px;top:362.70px;width:54.75px;height:16.47px;background:#ffffff"></div>
<div class="t m" style="left:560.50px;top:362.70px;width:50.25px;height:17.47px;line-height:17.47px;text-align:right;">-</div>
<div style="left:616.75px;top:362.70px;width:54.75px;height:16.47px;background:#ffffff"></div>
<div class="t m" style="left:616.75px;top:362.70px;width:50.25px;height:17.47px;line-height:17.47px;text-align:right;">-</div>
<div style="left:673.00px;top:362.70px;width:54.75px;height:16.47px;background:#ffffff"></div>
<div class="t m" style="left:673.00px;top:362.70px;width:50.25px;height:17.47px;line-height:17.47px;text-align:right;">-</div>
<div style="left:729.25px;top:362.70px;width:54.75px;height:16.47px;background:#ffffff"></div>
<div class="t m" style="left:729.25px;top:362.70px;width:50.25px;height:17.47px;line-height:17.47px;text-align:right;">-</div>
<div style="left:785.50px;top:362.70px;width:54.75px;height:16.47px;background:#ffffff"></div>
<div class="t m" style="left:785.50px;top:362.70px;width:50.25px;height:17.47px;line-height:17.47px;text-align:right;">-</div>
<div style="left:841.75px;top:362.70px;width:54.75px;height:16.47px;background:#ffffff"></div>
<div class="t m" style="left:841.75px;top:362.70px;width:50.25px;height:17.47px;line-height:17.47px;text-align:right;">-</div>
<div style="left:898.00px;top:362.70px;width:54.75px;height:16.47px;background:#ffffff"></div>
<div class="t m" style="left:898.00px;top:362.70px;width:50.25px;height:17.47px;line-height:17.47px;text-align:right;">-</div>
<div style="left:954.25px;top:362.70px;width:54.75px;height:16.47px;background:#ffffff"></div>
<div class="t m" style="left:954.25px;top:362.70px;width:50.25px;height:17.47px;line-height:17.47px;text-align:right;">-</div>
<div style="left:1010.50px;top:362.70px;width:54.75px;height:16.47px;background:#ffffff"></div>
<div class="t m" style="left:1010.50px;top:362.70px;width:50.25px;height:17.47px;line-height:17.47px;text-align:right;">-</div>
<div style="left:1066.75px;top:362.70px;width:54.75px;height:16.47px;background:#ffffff"></div>
<div class="t m" style="left:1066.75px;top:362.70px;width:50.25px;height:17.47px;line-height:17.47px;text-align:right;">-</div>
<div style="left:1187.50px;top:362.70px;width:210.50px;height:15.47px;background:#c0e1fa"></div>
<div style="left:168.50px;top:362.70px;width:108.50px;height:15.97px;background:linear-gradient(#eef2ef,#c0ddc7)"></div>
<div style="left:279.00px;top:362.70px;width:54.50px;height:15.97px;background:#c0e1fa"></div>
<div class="t " style="left:10.50px;top:362.70px;width:160.00px;height:17.47px;line-height:17.47px;text-align:left;">6104 (Meals/Entertainment)</div>
<div class="t " style="left:170.50px;top:362.70px;width:108.00px;height:17.47px;line-height:17.47px;text-align:left;">Evenly<span class="dd">&#9662;</span></div>
<div class="t " style="left:279.00px;top:362.70px;width:50.50px;height:17.47px;line-height:17.47px;text-align:right;">8,500.0</div>
<div class="t b" style="left:384.00px;top:362.70px;width:57.50px;height:17.47px;line-height:17.47px;text-align:right;">74,472</div>
<div class="t b" style="left:1121.00px;top:362.70px;width:59.50px;height:17.47px;line-height:17.47px;text-align:right;">-</div>
<div style="left:8.00px;top:396.64px;width:375.00px;height:1.00px;background:#dedede"></div>
<div style="left:384.00px;top:380.17px;width:63.50px;height:16.47px;background:#eeeeee"></div>
<div style="left:384.00px;top:396.64px;width:63.50px;height:1.00px;background:#dedede"></div>
<div style="left:1121.00px;top:380.17px;width:65.00px;height:16.47px;background:#f0f0f0"></div>
<div style="left:1121.00px;top:396.64px;width:66.00px;height:1.00px;background:#dedede"></div>
<div style="left:1186.50px;top:379.17px;width:212.00px;height:18.47px;background:#f2f9fe"></div>
<div style="left:448.00px;top:380.17px;width:54.75px;height:16.47px;background:#ffffff"></div>
<div class="t m" style="left:448.00px;top:380.17px;width:50.25px;height:17.47px;line-height:17.47px;text-align:right;">2,956</div>
<div style="left:504.25px;top:380.17px;width:54.75px;height:16.47px;background:#ffffff"></div>
<div class="t m" style="left:504.25px;top:380.17px;width:50.25px;height:17.47px;line-height:17.47px;text-align:right;">2,904</div>
<div style="left:560.50px;top:380.17px;width:54.75px;height:16.47px;background:#ffffff"></div>
<div class="t m" style="left:560.50px;top:380.17px;width:50.25px;height:17.47px;line-height:17.47px;text-align:right;">2,853</div>
<div style="left:616.75px;top:380.17px;width:54.75px;height:16.47px;background:#ffffff"></div>
<div class="t m" style="left:616.75px;top:380.17px;width:50.25px;height:17.47px;line-height:17.47px;text-align:right;">2,801</div>
<div style="left:673.00px;top:380.17px;width:54.75px;height:16.47px;background:#ffffff"></div>
<div class="t m" style="left:673.00px;top:380.17px;width:50.25px;height:17.47px;line-height:17.47px;text-align:right;">2,750</div>
<div style="left:729.25px;top:380.17px;width:54.75px;height:16.47px;background:#ffffff"></div>
<div class="t m" style="left:729.25px;top:380.17px;width:50.25px;height:17.47px;line-height:17.47px;text-align:right;">2,698</div>
<div style="left:785.50px;top:380.17px;width:54.75px;height:16.47px;background:#ffffff"></div>
<div class="t m" style="left:785.50px;top:380.17px;width:50.25px;height:17.47px;line-height:17.47px;text-align:right;">2,647</div>
<div style="left:841.75px;top:380.17px;width:54.75px;height:16.47px;background:#ffffff"></div>
<div class="t m" style="left:841.75px;top:380.17px;width:50.25px;height:17.47px;line-height:17.47px;text-align:right;">2,595</div>
<div style="left:898.00px;top:380.17px;width:54.75px;height:16.47px;background:#ffffff"></div>
<div class="t m" style="left:898.00px;top:380.17px;width:50.25px;height:17.47px;line-height:17.47px;text-align:right;">2,544</div>
<div style="left:954.25px;top:380.17px;width:54.75px;height:16.47px;background:#ffffff"></div>
<div class="t m" style="left:954.25px;top:380.17px;width:50.25px;height:17.47px;line-height:17.47px;text-align:right;">2,492</div>
<div style="left:1010.50px;top:380.17px;width:54.75px;height:16.47px;background:#ffffff"></div>
<div class="t m" style="left:1010.50px;top:380.17px;width:50.25px;height:17.47px;line-height:17.47px;text-align:right;">2,441</div>
<div style="left:1066.75px;top:380.17px;width:54.75px;height:16.47px;background:#ffffff"></div>
<div class="t m" style="left:1066.75px;top:380.17px;width:50.25px;height:17.47px;line-height:17.47px;text-align:right;">2,389</div>
<div style="left:1187.50px;top:380.17px;width:210.50px;height:15.47px;background:#c0e1fa"></div>
<div style="left:168.50px;top:380.17px;width:108.50px;height:15.97px;background:linear-gradient(#eef2ef,#c0ddc7)"></div>
<div style="left:279.00px;top:380.17px;width:54.50px;height:15.97px;background:#c0e1fa"></div>
<div class="t " style="left:10.50px;top:380.17px;width:160.00px;height:17.47px;line-height:17.47px;text-align:left;">6105 (Recruitment)</div>
<div class="t " style="left:170.50px;top:380.17px;width:108.00px;height:17.47px;line-height:17.47px;text-align:left;">Linear Regression<span class="dd">&#9662;</span></div>
<div class="t " style="left:279.00px;top:380.17px;width:50.50px;height:17.47px;line-height:17.47px;text-align:right;">2.0</div>
<div class="t " style="left:340.00px;top:380.17px;width:30.00px;height:17.47px;line-height:17.47px;text-align:left;">-</div>
<div class="t b" style="left:384.00px;top:380.17px;width:57.50px;height:17.47px;line-height:17.47px;text-align:right;">40,130</div>
<div class="t b" style="left:1121.00px;top:380.17px;width:59.50px;height:17.47px;line-height:17.47px;text-align:right;">32,070</div>
<div style="left:8.00px;top:414.11px;width:375.00px;height:1.00px;background:#dedede"></div>
<div style="left:384.00px;top:397.64px;width:63.50px;height:16.47px;background:#eeeeee"></div>
<div style="left:384.00px;top:414.11px;width:63.50px;height:1.00px;background:#dedede"></div>
<div style="left:1121.00px;top:397.64px;width:65.00px;height:16.47px;background:#f0f0f0"></div>
<div style="left:1121.00px;top:414.11px;width:66.00px;height:1.00px;background:#dedede"></div>
<div style="left:1186.50px;top:396.64px;width:212.00px;height:18.47px;background:#f2f9fe"></div>
<div style="left:448.00px;top:397.64px;width:54.75px;height:16.47px;background:#ffffff"></div>
<div class="t m" style="left:448.00px;top:397.64px;width:50.25px;height:17.47px;line-height:17.47px;text-align:right;">4,719</div>
<div style="left:504.25px;top:397.64px;width:54.75px;height:16.47px;background:#ffffff"></div>
<div class="t m" style="left:504.25px;top:397.64px;width:50.25px;height:17.47px;line-height:17.47px;text-align:right;">8,227</div>
<div style="left:560.50px;top:397.64px;width:54.75px;height:16.47px;background:#ffffff"></div>
<div class="t m" style="left:560.50px;top:397.64px;width:50.25px;height:17.47px;line-height:17.47px;text-align:right;">3,934</div>
<div style="left:616.75px;top:397.64px;width:54.75px;height:16.47px;background:#ffffff"></div>
<div class="t m" style="left:616.75px;top:397.64px;width:50.25px;height:17.47px;line-height:17.47px;text-align:right;">4,567</div>
<div style="left:673.00px;top:397.64px;width:54.75px;height:16.47px;background:#ffffff"></div>
<div class="t m" style="left:673.00px;top:397.64px;width:50.25px;height:17.47px;line-height:17.47px;text-align:right;">2,248</div>
<div style="left:729.25px;top:397.64px;width:54.75px;height:16.47px;background:#ffffff"></div>
<div class="t m" style="left:729.25px;top:397.64px;width:50.25px;height:17.47px;line-height:17.47px;text-align:right;">4,787</div>
<div style="left:785.50px;top:397.64px;width:54.75px;height:16.47px;background:#ffffff"></div>
<div class="t m" style="left:785.50px;top:397.64px;width:50.25px;height:17.47px;line-height:17.47px;text-align:right;">5,508</div>
<div style="left:841.75px;top:397.64px;width:54.75px;height:16.47px;background:#ffffff"></div>
<div class="t m" style="left:841.75px;top:397.64px;width:50.25px;height:17.47px;line-height:17.47px;text-align:right;">6,492</div>
<div style="left:898.00px;top:397.64px;width:54.75px;height:16.47px;background:#ffffff"></div>
<div class="t m" style="left:898.00px;top:397.64px;width:50.25px;height:17.47px;line-height:17.47px;text-align:right;">3,737</div>
<div style="left:954.25px;top:397.64px;width:54.75px;height:16.47px;background:#ffffff"></div>
<div class="t m" style="left:954.25px;top:397.64px;width:50.25px;height:17.47px;line-height:17.47px;text-align:right;">2,953</div>
<div style="left:1010.50px;top:397.64px;width:54.75px;height:16.47px;background:#ffffff"></div>
<div class="t m" style="left:1010.50px;top:397.64px;width:50.25px;height:17.47px;line-height:17.47px;text-align:right;">4,497</div>
<div style="left:1066.75px;top:397.64px;width:54.75px;height:16.47px;background:#ffffff"></div>
<div class="t m" style="left:1066.75px;top:397.64px;width:50.25px;height:17.47px;line-height:17.47px;text-align:right;">3,601</div>
<div style="left:1187.50px;top:397.64px;width:210.50px;height:15.47px;background:#c0e1fa"></div>
<div class="t " style="left:1188.20px;top:397.64px;width:210.00px;height:17.47px;line-height:17.47px;text-align:left;">CPI increase for misc costs</div>
<div style="left:168.50px;top:397.64px;width:108.50px;height:15.97px;background:linear-gradient(#eef2ef,#c0ddc7)"></div>
<div style="left:279.00px;top:397.64px;width:54.50px;height:15.97px;background:#c0e1fa"></div>
<div class="t " style="left:10.50px;top:397.64px;width:160.00px;height:17.47px;line-height:17.47px;text-align:left;">6200 (Miscellaneous Expense)</div>
<div class="t " style="left:170.50px;top:397.64px;width:108.00px;height:17.47px;line-height:17.47px;text-align:left;letter-spacing:-0.68px">Seasonal Regression<span class="dd">&#9662;</span></div>
<div class="t " style="left:279.00px;top:397.64px;width:50.50px;height:17.47px;line-height:17.47px;text-align:right;">5.0</div>
<div class="t " style="left:340.00px;top:397.64px;width:30.00px;height:17.47px;line-height:17.47px;text-align:left;">-</div>
<div class="t b" style="left:384.00px;top:397.64px;width:57.50px;height:17.47px;line-height:17.47px;text-align:right;">43,682</div>
<div class="t b" style="left:1121.00px;top:397.64px;width:59.50px;height:17.47px;line-height:17.47px;text-align:right;">55,270</div>
<div style="left:8.00px;top:431.58px;width:375.00px;height:1.00px;background:#dedede"></div>
<div style="left:384.00px;top:415.11px;width:63.50px;height:16.47px;background:#eeeeee"></div>
<div style="left:384.00px;top:431.58px;width:63.50px;height:1.00px;background:#dedede"></div>
<div style="left:1121.00px;top:415.11px;width:65.00px;height:16.47px;background:#f0f0f0"></div>
<div style="left:1121.00px;top:431.58px;width:66.00px;height:1.00px;background:#dedede"></div>
<div style="left:1186.50px;top:414.11px;width:212.00px;height:18.47px;background:#f2f9fe"></div>
<div style="left:448.00px;top:415.11px;width:54.75px;height:16.47px;background:#ffffff"></div>
<div class="t m" style="left:448.00px;top:415.11px;width:50.25px;height:17.47px;line-height:17.47px;text-align:right;">6,077</div>
<div style="left:504.25px;top:415.11px;width:54.75px;height:16.47px;background:#ffffff"></div>
<div class="t m" style="left:504.25px;top:415.11px;width:50.25px;height:17.47px;line-height:17.47px;text-align:right;">14,577</div>
<div style="left:560.50px;top:415.11px;width:54.75px;height:16.47px;background:#ffffff"></div>
<div class="t m" style="left:560.50px;top:415.11px;width:50.25px;height:17.47px;line-height:17.47px;text-align:right;">6,077</div>
<div style="left:616.75px;top:415.11px;width:54.75px;height:16.47px;background:#ffffff"></div>
<div class="t m" style="left:616.75px;top:415.11px;width:50.25px;height:17.47px;line-height:17.47px;text-align:right;">1,517</div>
<div style="left:673.00px;top:415.11px;width:54.75px;height:16.47px;background:#ffffff"></div>
<div class="t m" style="left:673.00px;top:415.11px;width:50.25px;height:17.47px;line-height:17.47px;text-align:right;">6,042</div>
<div style="left:729.25px;top:415.11px;width:54.75px;height:16.47px;background:#ffffff"></div>
<div class="t m" style="left:729.25px;top:415.11px;width:50.25px;height:17.47px;line-height:17.47px;text-align:right;">1,517</div>
<div style="left:785.50px;top:415.11px;width:54.75px;height:16.47px;background:#ffffff"></div>
<div class="t m" style="left:785.50px;top:415.11px;width:50.25px;height:17.47px;line-height:17.47px;text-align:right;">1,517</div>
<div style="left:841.75px;top:415.11px;width:54.75px;height:16.47px;background:#ffffff"></div>
<div class="t m" style="left:841.75px;top:415.11px;width:50.25px;height:17.47px;line-height:17.47px;text-align:right;">6,042</div>
<div style="left:898.00px;top:415.11px;width:54.75px;height:16.47px;background:#ffffff"></div>
<div class="t m" style="left:898.00px;top:415.11px;width:50.25px;height:17.47px;line-height:17.47px;text-align:right;">1,517</div>
<div style="left:954.25px;top:415.11px;width:54.75px;height:16.47px;background:#ffffff"></div>
<div class="t m" style="left:954.25px;top:415.11px;width:50.25px;height:17.47px;line-height:17.47px;text-align:right;">5,202</div>
<div style="left:1010.50px;top:415.11px;width:54.75px;height:16.47px;background:#ffffff"></div>
<div class="t m" style="left:1010.50px;top:415.11px;width:50.25px;height:17.47px;line-height:17.47px;text-align:right;">5,202</div>
<div style="left:1066.75px;top:415.11px;width:54.75px;height:16.47px;background:#ffffff"></div>
<div class="t m" style="left:1066.75px;top:415.11px;width:50.25px;height:17.47px;line-height:17.47px;text-align:right;">5,202</div>
<div style="left:1187.50px;top:415.11px;width:210.50px;height:15.47px;background:#c0e1fa"></div>
<div class="t " style="left:10.50px;top:415.11px;width:160.00px;height:17.47px;line-height:17.47px;text-align:left;">6301 (Travel Expense)</div>
<div class="t g" style="left:170.50px;top:415.11px;width:108.00px;height:17.47px;line-height:17.47px;text-align:left;">Travel</div>
<div class="t b" style="left:384.00px;top:415.11px;width:57.50px;height:17.47px;line-height:17.47px;text-align:right;">50,317</div>
<div class="t b" style="left:1121.00px;top:415.11px;width:59.50px;height:17.47px;line-height:17.47px;text-align:right;">60,484</div>
<div style="left:8.00px;top:449.05px;width:375.00px;height:1.00px;background:#dedede"></div>
<div style="left:384.00px;top:432.58px;width:63.50px;height:16.47px;background:#eeeeee"></div>
<div style="left:384.00px;top:449.05px;width:63.50px;height:1.00px;background:#dedede"></div>
<div style="left:1121.00px;top:432.58px;width:65.00px;height:16.47px;background:#f0f0f0"></div>
<div style="left:1121.00px;top:449.05px;width:66.00px;height:1.00px;background:#dedede"></div>
<div style="left:1186.50px;top:431.58px;width:212.00px;height:18.47px;background:#f2f9fe"></div>
<div style="left:448.00px;top:449.05px;width:56.25px;height:1.00px;background:#e3e3e3"></div>
<div class="t m" style="left:448.00px;top:432.58px;width:50.25px;height:17.47px;line-height:17.47px;text-align:right;">1,330</div>
<div style="left:504.25px;top:449.05px;width:56.25px;height:1.00px;background:#e3e3e3"></div>
<div class="t m" style="left:504.25px;top:432.58px;width:50.25px;height:17.47px;line-height:17.47px;text-align:right;">1,288</div>
<div style="left:560.50px;top:449.05px;width:56.25px;height:1.00px;background:#e3e3e3"></div>
<div class="t m" style="left:560.50px;top:432.58px;width:50.25px;height:17.47px;line-height:17.47px;text-align:right;">1,417</div>
<div style="left:616.75px;top:449.05px;width:56.25px;height:1.00px;background:#e3e3e3"></div>
<div class="t m" style="left:616.75px;top:432.58px;width:50.25px;height:17.47px;line-height:17.47px;text-align:right;">1,190</div>
<div style="left:673.00px;top:449.05px;width:56.25px;height:1.00px;background:#e3e3e3"></div>
<div class="t m" style="left:673.00px;top:432.58px;width:50.25px;height:17.47px;line-height:17.47px;text-align:right;">857</div>
<div style="left:729.25px;top:449.05px;width:56.25px;height:1.00px;background:#e3e3e3"></div>
<div class="t m" style="left:729.25px;top:432.58px;width:50.25px;height:17.47px;line-height:17.47px;text-align:right;">874</div>
<div style="left:785.50px;top:449.05px;width:56.25px;height:1.00px;background:#e3e3e3"></div>
<div class="t m" style="left:785.50px;top:432.58px;width:50.25px;height:17.47px;line-height:17.47px;text-align:right;">822</div>
<div style="left:841.75px;top:449.05px;width:56.25px;height:1.00px;background:#e3e3e3"></div>
<div class="t m" style="left:841.75px;top:432.58px;width:50.25px;height:17.47px;line-height:17.47px;text-align:right;">756</div>
<div style="left:898.00px;top:449.05px;width:56.25px;height:1.00px;background:#e3e3e3"></div>
<div class="t m" style="left:898.00px;top:432.58px;width:50.25px;height:17.47px;line-height:17.47px;text-align:right;">688</div>
<div style="left:954.25px;top:449.05px;width:56.25px;height:1.00px;background:#e3e3e3"></div>
<div class="t m" style="left:954.25px;top:432.58px;width:50.25px;height:17.47px;line-height:17.47px;text-align:right;">509</div>
<div style="left:1010.50px;top:449.05px;width:56.25px;height:1.00px;background:#e3e3e3"></div>
<div class="t m" style="left:1010.50px;top:432.58px;width:50.25px;height:17.47px;line-height:17.47px;text-align:right;">534</div>
<div style="left:1066.75px;top:449.05px;width:56.25px;height:1.00px;background:#e3e3e3"></div>
<div class="t m" style="left:1066.75px;top:432.58px;width:50.25px;height:17.47px;line-height:17.47px;text-align:right;">422</div>
<div style="left:1187.50px;top:432.58px;width:210.50px;height:15.47px;background:#c0e1fa"></div>
<div class="t " style="left:10.50px;top:432.58px;width:160.00px;height:17.47px;line-height:17.47px;text-align:left;">6502 (Repairs & Maintenance)</div>
<div class="t g" style="left:170.50px;top:432.58px;width:108.00px;height:17.47px;line-height:17.47px;text-align:left;">Centrally Planned</div>
<div class="t b" style="left:384.00px;top:432.58px;width:57.50px;height:17.47px;line-height:17.47px;text-align:right;">36,038</div>
<div class="t b" style="left:1121.00px;top:432.58px;width:59.50px;height:17.47px;line-height:17.47px;text-align:right;">10,687</div>
<div style="left:8.00px;top:466.52px;width:375.00px;height:1.00px;background:#dedede"></div>
<div style="left:384.00px;top:450.05px;width:63.50px;height:16.47px;background:#eeeeee"></div>
<div style="left:384.00px;top:466.52px;width:63.50px;height:1.00px;background:#dedede"></div>
<div style="left:1121.00px;top:450.05px;width:65.00px;height:16.47px;background:#f0f0f0"></div>
<div style="left:1121.00px;top:466.52px;width:66.00px;height:1.00px;background:#dedede"></div>
<div style="left:1186.50px;top:449.05px;width:212.00px;height:18.47px;background:#f2f9fe"></div>
<div style="left:448.00px;top:466.52px;width:56.25px;height:1.00px;background:#e3e3e3"></div>
<div class="t m" style="left:448.00px;top:450.05px;width:50.25px;height:17.47px;line-height:17.47px;text-align:right;">3,000</div>
<div style="left:504.25px;top:466.52px;width:56.25px;height:1.00px;background:#e3e3e3"></div>
<div class="t m" style="left:504.25px;top:450.05px;width:50.25px;height:17.47px;line-height:17.47px;text-align:right;">2,500</div>
<div style="left:560.50px;top:466.52px;width:56.25px;height:1.00px;background:#e3e3e3"></div>
<div class="t m" style="left:560.50px;top:450.05px;width:50.25px;height:17.47px;line-height:17.47px;text-align:right;">2,286</div>
<div style="left:616.75px;top:466.52px;width:56.25px;height:1.00px;background:#e3e3e3"></div>
<div class="t m" style="left:616.75px;top:450.05px;width:50.25px;height:17.47px;line-height:17.47px;text-align:right;">2,149</div>
<div style="left:673.00px;top:466.52px;width:56.25px;height:1.00px;background:#e3e3e3"></div>
<div class="t m" style="left:673.00px;top:450.05px;width:50.25px;height:17.47px;line-height:17.47px;text-align:right;">1,912</div>
<div style="left:729.25px;top:466.52px;width:56.25px;height:1.00px;background:#e3e3e3"></div>
<div class="t m" style="left:729.25px;top:450.05px;width:50.25px;height:17.47px;line-height:17.47px;text-align:right;">1,396</div>
<div style="left:785.50px;top:466.52px;width:56.25px;height:1.00px;background:#e3e3e3"></div>
<div class="t m" style="left:785.50px;top:450.05px;width:50.25px;height:17.47px;line-height:17.47px;text-align:right;">1,326</div>
<div style="left:841.75px;top:466.52px;width:56.25px;height:1.00px;background:#e3e3e3"></div>
<div class="t m" style="left:841.75px;top:450.05px;width:50.25px;height:17.47px;line-height:17.47px;text-align:right;">1,393</div>
<div style="left:898.00px;top:466.52px;width:56.25px;height:1.00px;background:#e3e3e3"></div>
<div class="t m" style="left:898.00px;top:450.05px;width:50.25px;height:17.47px;line-height:17.47px;text-align:right;">1,532</div>
<div style="left:954.25px;top:466.52px;width:56.25px;height:1.00px;background:#e3e3e3"></div>
<div class="t m" style="left:954.25px;top:450.05px;width:50.25px;height:17.47px;line-height:17.47px;text-align:right;">1,164</div>
<div style="left:1010.50px;top:466.52px;width:56.25px;height:1.00px;background:#e3e3e3"></div>
<div class="t m" style="left:1010.50px;top:450.05px;width:50.25px;height:17.47px;line-height:17.47px;text-align:right;">850</div>
<div style="left:1066.75px;top:466.52px;width:56.25px;height:1.00px;background:#e3e3e3"></div>
<div class="t m" style="left:1066.75px;top:450.05px;width:50.25px;height:17.47px;line-height:17.47px;text-align:right;">892</div>
<div style="left:1187.50px;top:450.05px;width:210.50px;height:15.47px;background:#c0e1fa"></div>
<div class="t " style="left:1188.20px;top:450.05px;width:210.00px;height:17.47px;line-height:17.47px;text-align:left;">New sales office opening</div>
<div class="t " style="left:10.50px;top:450.05px;width:160.00px;height:17.47px;line-height:17.47px;text-align:left;">6503 (Office Supplies)</div>
<div class="t g" style="left:170.50px;top:450.05px;width:108.00px;height:17.47px;line-height:17.47px;text-align:left;">Centrally Planned</div>
<div class="t b" style="left:384.00px;top:450.05px;width:57.50px;height:17.47px;line-height:17.47px;text-align:right;">13,767</div>
<div class="t b" style="left:1121.00px;top:450.05px;width:59.50px;height:17.47px;line-height:17.47px;text-align:right;">20,400</div>
<div style="left:8.00px;top:483.99px;width:375.00px;height:1.00px;background:#dedede"></div>
<div style="left:384.00px;top:467.52px;width:63.50px;height:16.47px;background:#eeeeee"></div>
<div style="left:384.00px;top:483.99px;width:63.50px;height:1.00px;background:#dedede"></div>
<div style="left:1121.00px;top:467.52px;width:65.00px;height:16.47px;background:#f0f0f0"></div>
<div style="left:1121.00px;top:483.99px;width:66.00px;height:1.00px;background:#dedede"></div>
<div style="left:1186.50px;top:466.52px;width:212.00px;height:18.47px;background:#f2f9fe"></div>
<div style="left:448.00px;top:483.99px;width:56.25px;height:1.00px;background:#e3e3e3"></div>
<div class="t m" style="left:448.00px;top:467.52px;width:50.25px;height:17.47px;line-height:17.47px;text-align:right;">4,400</div>
<div style="left:504.25px;top:483.99px;width:56.25px;height:1.00px;background:#e3e3e3"></div>
<div class="t m" style="left:504.25px;top:467.52px;width:50.25px;height:17.47px;line-height:17.47px;text-align:right;">4,139</div>
<div style="left:560.50px;top:483.99px;width:56.25px;height:1.00px;background:#e3e3e3"></div>
<div class="t m" style="left:560.50px;top:467.52px;width:50.25px;height:17.47px;line-height:17.47px;text-align:right;">4,263</div>
<div style="left:616.75px;top:483.99px;width:56.25px;height:1.00px;background:#e3e3e3"></div>
<div class="t m" style="left:616.75px;top:467.52px;width:50.25px;height:17.47px;line-height:17.47px;text-align:right;">3,155</div>
<div style="left:673.00px;top:483.99px;width:56.25px;height:1.00px;background:#e3e3e3"></div>
<div class="t m" style="left:673.00px;top:467.52px;width:50.25px;height:17.47px;line-height:17.47px;text-align:right;">2,619</div>
<div style="left:729.25px;top:483.99px;width:56.25px;height:1.00px;background:#e3e3e3"></div>
<div class="t m" style="left:729.25px;top:467.52px;width:50.25px;height:17.47px;line-height:17.47px;text-align:right;">2,854</div>
<div style="left:785.50px;top:483.99px;width:56.25px;height:1.00px;background:#e3e3e3"></div>
<div class="t m" style="left:785.50px;top:467.52px;width:50.25px;height:17.47px;line-height:17.47px;text-align:right;">2,597</div>
<div style="left:841.75px;top:483.99px;width:56.25px;height:1.00px;background:#e3e3e3"></div>
<div class="t m" style="left:841.75px;top:467.52px;width:50.25px;height:17.47px;line-height:17.47px;text-align:right;">2,857</div>
<div style="left:898.00px;top:483.99px;width:56.25px;height:1.00px;background:#e3e3e3"></div>
<div class="t m" style="left:898.00px;top:467.52px;width:50.25px;height:17.47px;line-height:17.47px;text-align:right;">2,514</div>
<div style="left:954.25px;top:483.99px;width:56.25px;height:1.00px;background:#e3e3e3"></div>
<div class="t m" style="left:954.25px;top:467.52px;width:50.25px;height:17.47px;line-height:17.47px;text-align:right;">2,238</div>
<div style="left:1010.50px;top:483.99px;width:56.25px;height:1.00px;background:#e3e3e3"></div>
<div class="t m" style="left:1010.50px;top:467.52px;width:50.25px;height:17.47px;line-height:17.47px;text-align:right;">1,566</div>
<div style="left:1066.75px;top:483.99px;width:56.25px;height:1.00px;background:#e3e3e3"></div>
<div class="t m" style="left:1066.75px;top:467.52px;width:50.25px;height:17.47px;line-height:17.47px;text-align:right;">1,535</div>
<div style="left:1187.50px;top:467.52px;width:210.50px;height:15.47px;background:#c0e1fa"></div>
<div class="t " style="left:10.50px;top:467.52px;width:160.00px;height:17.47px;line-height:17.47px;text-align:left;">6601 (Rent)</div>
<div class="t g" style="left:170.50px;top:467.52px;width:108.00px;height:17.47px;line-height:17.47px;text-align:left;">Centrally Planned</div>
<div class="t b" style="left:384.00px;top:467.52px;width:57.50px;height:17.47px;line-height:17.47px;text-align:right;">77,623</div>
<div class="t b" style="left:1121.00px;top:467.52px;width:59.50px;height:17.47px;line-height:17.47px;text-align:right;">34,738</div>
<div style="left:8.00px;top:501.46px;width:375.00px;height:1.00px;background:#dedede"></div>
<div style="left:384.00px;top:484.99px;width:63.50px;height:16.47px;background:#eeeeee"></div>
<div style="left:384.00px;top:501.46px;width:63.50px;height:1.00px;background:#dedede"></div>
<div style="left:1121.00px;top:484.99px;width:65.00px;height:16.47px;background:#f0f0f0"></div>
<div style="left:1121.00px;top:501.46px;width:66.00px;height:1.00px;background:#dedede"></div>
<div style="left:1186.50px;top:483.99px;width:212.00px;height:18.47px;background:#f2f9fe"></div>
<div style="left:448.00px;top:501.46px;width:56.25px;height:1.00px;background:#e3e3e3"></div>
<div class="t m" style="left:448.00px;top:484.99px;width:50.25px;height:17.47px;line-height:17.47px;text-align:right;">4,500</div>
<div style="left:504.25px;top:501.46px;width:56.25px;height:1.00px;background:#e3e3e3"></div>
<div class="t m" style="left:504.25px;top:484.99px;width:50.25px;height:17.47px;line-height:17.47px;text-align:right;">4,537</div>
<div style="left:560.50px;top:501.46px;width:56.25px;height:1.00px;background:#e3e3e3"></div>
<div class="t m" style="left:560.50px;top:484.99px;width:50.25px;height:17.47px;line-height:17.47px;text-align:right;">4,809</div>
<div style="left:616.75px;top:501.46px;width:56.25px;height:1.00px;background:#e3e3e3"></div>
<div class="t m" style="left:616.75px;top:484.99px;width:50.25px;height:17.47px;line-height:17.47px;text-align:right;">3,463</div>
<div style="left:673.00px;top:501.46px;width:56.25px;height:1.00px;background:#e3e3e3"></div>
<div class="t m" style="left:673.00px;top:484.99px;width:50.25px;height:17.47px;line-height:17.47px;text-align:right;">3,601</div>
<div style="left:729.25px;top:501.46px;width:56.25px;height:1.00px;background:#e3e3e3"></div>
<div class="t m" style="left:729.25px;top:484.99px;width:50.25px;height:17.47px;line-height:17.47px;text-align:right;">3,817</div>
<div style="left:785.50px;top:501.46px;width:56.25px;height:1.00px;background:#e3e3e3"></div>
<div class="t m" style="left:785.50px;top:484.99px;width:50.25px;height:17.47px;line-height:17.47px;text-align:right;">3,855</div>
<div style="left:841.75px;top:501.46px;width:56.25px;height:1.00px;background:#e3e3e3"></div>
<div class="t m" style="left:841.75px;top:484.99px;width:50.25px;height:17.47px;line-height:17.47px;text-align:right;">3,933</div>
<div style="left:898.00px;top:501.46px;width:56.25px;height:1.00px;background:#e3e3e3"></div>
<div class="t m" style="left:898.00px;top:484.99px;width:50.25px;height:17.47px;line-height:17.47px;text-align:right;">2,989</div>
<div style="left:954.25px;top:501.46px;width:56.25px;height:1.00px;background:#e3e3e3"></div>
<div class="t m" style="left:954.25px;top:484.99px;width:50.25px;height:17.47px;line-height:17.47px;text-align:right;">2,600</div>
<div style="left:1010.50px;top:501.46px;width:56.25px;height:1.00px;background:#e3e3e3"></div>
<div class="t m" style="left:1010.50px;top:484.99px;width:50.25px;height:17.47px;line-height:17.47px;text-align:right;">1,924</div>
<div style="left:1066.75px;top:501.46px;width:56.25px;height:1.00px;background:#e3e3e3"></div>
<div class="t m" style="left:1066.75px;top:484.99px;width:50.25px;height:17.47px;line-height:17.47px;text-align:right;">1,963</div>
<div style="left:1187.50px;top:484.99px;width:210.50px;height:15.47px;background:#c0e1fa"></div>
<div class="t " style="left:10.50px;top:484.99px;width:160.00px;height:17.47px;line-height:17.47px;text-align:left;">6602 (Utilities)</div>
<div class="t g" style="left:170.50px;top:484.99px;width:108.00px;height:17.47px;line-height:17.47px;text-align:left;">Centrally Planned</div>
<div class="t b" style="left:384.00px;top:484.99px;width:57.50px;height:17.47px;line-height:17.47px;text-align:right;">35,501</div>
<div class="t b" style="left:1121.00px;top:484.99px;width:59.50px;height:17.47px;line-height:17.47px;text-align:right;">41,991</div>
<div style="left:8.00px;top:518.93px;width:375.00px;height:1.00px;background:#dedede"></div>
<div style="left:384.00px;top:502.46px;width:63.50px;height:16.47px;background:#eeeeee"></div>
<div style="left:384.00px;top:518.93px;width:63.50px;height:1.00px;background:#dedede"></div>
<div style="left:1121.00px;top:502.46px;width:65.00px;height:16.47px;background:#f0f0f0"></div>
<div style="left:1121.00px;top:518.93px;width:66.00px;height:1.00px;background:#dedede"></div>
<div style="left:1186.50px;top:501.46px;width:212.00px;height:18.47px;background:#f2f9fe"></div>
<div style="left:448.00px;top:518.93px;width:56.25px;height:1.00px;background:#e3e3e3"></div>
<div class="t m" style="left:448.00px;top:502.46px;width:50.25px;height:17.47px;line-height:17.47px;text-align:right;">1,080</div>
<div style="left:504.25px;top:518.93px;width:56.25px;height:1.00px;background:#e3e3e3"></div>
<div class="t m" style="left:504.25px;top:502.46px;width:50.25px;height:17.47px;line-height:17.47px;text-align:right;">1,170</div>
<div style="left:560.50px;top:518.93px;width:56.25px;height:1.00px;background:#e3e3e3"></div>
<div class="t m" style="left:560.50px;top:502.46px;width:50.25px;height:17.47px;line-height:17.47px;text-align:right;">1,260</div>
<div style="left:616.75px;top:518.93px;width:56.25px;height:1.00px;background:#e3e3e3"></div>
<div class="t m" style="left:616.75px;top:502.46px;width:50.25px;height:17.47px;line-height:17.47px;text-align:right;">1,350</div>
<div style="left:673.00px;top:518.93px;width:56.25px;height:1.00px;background:#e3e3e3"></div>
<div class="t m" style="left:673.00px;top:502.46px;width:50.25px;height:17.47px;line-height:17.47px;text-align:right;">1,440</div>
<div style="left:729.25px;top:518.93px;width:56.25px;height:1.00px;background:#e3e3e3"></div>
<div class="t m" style="left:729.25px;top:502.46px;width:50.25px;height:17.47px;line-height:17.47px;text-align:right;">1,350</div>
<div style="left:785.50px;top:518.93px;width:56.25px;height:1.00px;background:#e3e3e3"></div>
<div class="t m" style="left:785.50px;top:502.46px;width:50.25px;height:17.47px;line-height:17.47px;text-align:right;">1,350</div>
<div style="left:841.75px;top:518.93px;width:56.25px;height:1.00px;background:#e3e3e3"></div>
<div class="t m" style="left:841.75px;top:502.46px;width:50.25px;height:17.47px;line-height:17.47px;text-align:right;">1,350</div>
<div style="left:898.00px;top:518.93px;width:56.25px;height:1.00px;background:#e3e3e3"></div>
<div class="t m" style="left:898.00px;top:502.46px;width:50.25px;height:17.47px;line-height:17.47px;text-align:right;">1,350</div>
<div style="left:954.25px;top:518.93px;width:56.25px;height:1.00px;background:#e3e3e3"></div>
<div class="t m" style="left:954.25px;top:502.46px;width:50.25px;height:17.47px;line-height:17.47px;text-align:right;">1,350</div>
<div style="left:1010.50px;top:518.93px;width:56.25px;height:1.00px;background:#e3e3e3"></div>
<div class="t m" style="left:1010.50px;top:502.46px;width:50.25px;height:17.47px;line-height:17.47px;text-align:right;">1,350</div>
<div style="left:1066.75px;top:518.93px;width:56.25px;height:1.00px;background:#e3e3e3"></div>
<div class="t m" style="left:1066.75px;top:502.46px;width:50.25px;height:17.47px;line-height:17.47px;text-align:right;">1,350</div>
<div style="left:1187.50px;top:502.46px;width:210.50px;height:15.47px;background:#c0e1fa"></div>
<div class="t " style="left:10.50px;top:502.46px;width:160.00px;height:17.47px;line-height:17.47px;text-align:left;">6401 (Telecom Subscriptions)</div>
<div class="t g" style="left:170.50px;top:502.46px;width:108.00px;height:17.47px;line-height:17.47px;text-align:left;">Centrally Planned</div>
<div class="t b" style="left:384.00px;top:502.46px;width:57.50px;height:17.47px;line-height:17.47px;text-align:right;">107,200</div>
<div class="t b" style="left:1121.00px;top:502.46px;width:59.50px;height:17.47px;line-height:17.47px;text-align:right;">15,750</div>
<div style="left:8.00px;top:536.40px;width:375.00px;height:1.00px;background:#dedede"></div>
<div style="left:384.00px;top:519.93px;width:63.50px;height:16.47px;background:#eeeeee"></div>
<div style="left:384.00px;top:536.40px;width:63.50px;height:1.00px;background:#dedede"></div>
<div style="left:1121.00px;top:519.93px;width:65.00px;height:16.47px;background:#f0f0f0"></div>
<div style="left:1121.00px;top:536.40px;width:66.00px;height:1.00px;background:#dedede"></div>
<div style="left:1186.50px;top:518.93px;width:212.00px;height:18.47px;background:#f2f9fe"></div>
<div style="left:448.00px;top:536.40px;width:56.25px;height:1.00px;background:#e3e3e3"></div>
<div class="t m" style="left:448.00px;top:519.93px;width:50.25px;height:17.47px;line-height:17.47px;text-align:right;">1,058</div>
<div style="left:504.25px;top:536.40px;width:56.25px;height:1.00px;background:#e3e3e3"></div>
<div class="t m" style="left:504.25px;top:519.93px;width:50.25px;height:17.47px;line-height:17.47px;text-align:right;">1,058</div>
<div style="left:560.50px;top:536.40px;width:56.25px;height:1.00px;background:#e3e3e3"></div>
<div class="t m" style="left:560.50px;top:519.93px;width:50.25px;height:17.47px;line-height:17.47px;text-align:right;">1,058</div>
<div style="left:616.75px;top:536.40px;width:56.25px;height:1.00px;background:#e3e3e3"></div>
<div class="t m" style="left:616.75px;top:519.93px;width:50.25px;height:17.47px;line-height:17.47px;text-align:right;">1,058</div>
<div style="left:673.00px;top:536.40px;width:56.25px;height:1.00px;background:#e3e3e3"></div>
<div class="t m" style="left:673.00px;top:519.93px;width:50.25px;height:17.47px;line-height:17.47px;text-align:right;">1,058</div>
<div style="left:729.25px;top:536.40px;width:56.25px;height:1.00px;background:#e3e3e3"></div>
<div class="t m" style="left:729.25px;top:519.93px;width:50.25px;height:17.47px;line-height:17.47px;text-align:right;">1,010</div>
<div style="left:785.50px;top:536.40px;width:56.25px;height:1.00px;background:#e3e3e3"></div>
<div class="t m" style="left:785.50px;top:519.93px;width:50.25px;height:17.47px;line-height:17.47px;text-align:right;">852</div>
<div style="left:841.75px;top:536.40px;width:56.25px;height:1.00px;background:#e3e3e3"></div>
<div class="t m" style="left:841.75px;top:519.93px;width:50.25px;height:17.47px;line-height:17.47px;text-align:right;">840</div>
<div style="left:898.00px;top:536.40px;width:56.25px;height:1.00px;background:#e3e3e3"></div>
<div class="t m" style="left:898.00px;top:519.93px;width:50.25px;height:17.47px;line-height:17.47px;text-align:right;">840</div>
<div style="left:954.25px;top:536.40px;width:56.25px;height:1.00px;background:#e3e3e3"></div>
<div class="t m" style="left:954.25px;top:519.93px;width:50.25px;height:17.47px;line-height:17.47px;text-align:right;">840</div>
<div style="left:1010.50px;top:536.40px;width:56.25px;height:1.00px;background:#e3e3e3"></div>
<div class="t m" style="left:1010.50px;top:519.93px;width:50.25px;height:17.47px;line-height:17.47px;text-align:right;">840</div>
<div style="left:1066.75px;top:536.40px;width:56.25px;height:1.00px;background:#e3e3e3"></div>
<div class="t m" style="left:1066.75px;top:519.93px;width:50.25px;height:17.47px;line-height:17.47px;text-align:right;">840</div>
<div style="left:1187.50px;top:519.93px;width:210.50px;height:15.47px;background:#c0e1fa"></div>
<div class="t " style="left:10.50px;top:519.93px;width:160.00px;height:17.47px;line-height:17.47px;text-align:left;">6501 (Dues and Subscriptions)</div>
<div class="t g" style="left:170.50px;top:519.93px;width:108.00px;height:17.47px;line-height:17.47px;text-align:left;">Centrally Planned</div>
<div class="t b" style="left:384.00px;top:519.93px;width:57.50px;height:17.47px;line-height:17.47px;text-align:right;">20,992</div>
<div class="t b" style="left:1121.00px;top:519.93px;width:59.50px;height:17.47px;line-height:17.47px;text-align:right;">11,352</div>
<div style="left:8.00px;top:553.87px;width:375.00px;height:1.00px;background:#dedede"></div>
<div style="left:384.00px;top:537.40px;width:63.50px;height:16.47px;background:#eeeeee"></div>
<div style="left:384.00px;top:553.87px;width:63.50px;height:1.00px;background:#dedede"></div>
<div style="left:1121.00px;top:537.40px;width:65.00px;height:16.47px;background:#f0f0f0"></div>
<div style="left:1121.00px;top:553.87px;width:66.00px;height:1.00px;background:#dedede"></div>
<div style="left:1186.50px;top:536.40px;width:212.00px;height:18.47px;background:#f2f9fe"></div>
<div style="left:448.00px;top:537.40px;width:54.75px;height:16.47px;background:#ffffff"></div>
<div class="t m" style="left:448.00px;top:537.40px;width:50.25px;height:17.47px;line-height:17.47px;text-align:right;">1,590</div>
<div style="left:504.25px;top:537.40px;width:54.75px;height:16.47px;background:#ffffff"></div>
<div class="t m" style="left:504.25px;top:537.40px;width:50.25px;height:17.47px;line-height:17.47px;text-align:right;">1,740</div>
<div style="left:560.50px;top:537.40px;width:54.75px;height:16.47px;background:#ffffff"></div>
<div class="t m" style="left:560.50px;top:537.40px;width:50.25px;height:17.47px;line-height:17.47px;text-align:right;">1,815</div>
<div style="left:616.75px;top:537.40px;width:54.75px;height:16.47px;background:#ffffff"></div>
<div class="t m" style="left:616.75px;top:537.40px;width:50.25px;height:17.47px;line-height:17.47px;text-align:right;">1,965</div>
<div style="left:673.00px;top:537.40px;width:54.75px;height:16.47px;background:#ffffff"></div>
<div class="t m" style="left:673.00px;top:537.40px;width:50.25px;height:17.47px;line-height:17.47px;text-align:right;">2,115</div>
<div style="left:729.25px;top:537.40px;width:54.75px;height:16.47px;background:#ffffff"></div>
<div class="t m" style="left:729.25px;top:537.40px;width:50.25px;height:17.47px;line-height:17.47px;text-align:right;">1,985</div>
<div style="left:785.50px;top:537.40px;width:54.75px;height:16.47px;background:#ffffff"></div>
<div class="t m" style="left:785.50px;top:537.40px;width:50.25px;height:17.47px;line-height:17.47px;text-align:right;">1,609</div>
<div style="left:841.75px;top:537.40px;width:54.75px;height:16.47px;background:#ffffff"></div>
<div class="t m" style="left:841.75px;top:537.40px;width:50.25px;height:17.47px;line-height:17.47px;text-align:right;">1,545</div>
<div style="left:898.00px;top:537.40px;width:54.75px;height:16.47px;background:#ffffff"></div>
<div class="t m" style="left:898.00px;top:537.40px;width:50.25px;height:17.47px;line-height:17.47px;text-align:right;">1,545</div>
<div style="left:954.25px;top:537.40px;width:54.75px;height:16.47px;background:#ffffff"></div>
<div class="t m" style="left:954.25px;top:537.40px;width:50.25px;height:17.47px;line-height:17.47px;text-align:right;">1,545</div>
<div style="left:1010.50px;top:537.40px;width:54.75px;height:16.47px;background:#ffffff"></div>
<div class="t m" style="left:1010.50px;top:537.40px;width:50.25px;height:17.47px;line-height:17.47px;text-align:right;">1,545</div>
<div style="left:1066.75px;top:537.40px;width:54.75px;height:16.47px;background:#ffffff"></div>
<div class="t m" style="left:1066.75px;top:537.40px;width:50.25px;height:17.47px;line-height:17.47px;text-align:right;">1,545</div>
<div style="left:1187.50px;top:537.40px;width:210.50px;height:15.47px;background:#c0e1fa"></div>
<div class="t " style="left:1188.20px;top:537.40px;width:210.00px;height:17.47px;line-height:17.47px;text-align:left;">Creation of new training program</div>
<div class="t " style="left:10.50px;top:537.40px;width:160.00px;height:17.47px;line-height:17.47px;text-align:left;">6302 (Training)</div>
<div class="t g" style="left:170.50px;top:537.40px;width:108.00px;height:17.47px;line-height:17.47px;text-align:left;">Calculated</div>
<div class="t b" style="left:384.00px;top:537.40px;width:57.50px;height:17.47px;line-height:17.47px;text-align:right;">32,635</div>
<div class="t b" style="left:1121.00px;top:537.40px;width:59.50px;height:17.47px;line-height:17.47px;text-align:right;">20,544</div>
<div style="left:8.00px;top:553.37px;width:1390.00px;height:1.50px;background:#bdbdbd"></div>
<div class="t b bl" style="left:10.50px;top:554.87px;width:300.00px;height:17.47px;line-height:17.47px;text-align:left;">Total General Operating Expenses</div>
<div class="t b" style="left:384.00px;top:554.87px;width:57.50px;height:17.47px;line-height:17.47px;text-align:right;">968,419</div>
<div class="t " style="left:448.00px;top:554.87px;width:50.25px;height:17.47px;line-height:17.47px;text-align:right;">32,815</div>
<div class="t " style="left:504.25px;top:554.87px;width:50.25px;height:17.47px;line-height:17.47px;text-align:right;">47,815</div>
<div class="t " style="left:560.50px;top:554.87px;width:50.25px;height:17.47px;line-height:17.47px;text-align:right;">32,982</div>
<div class="t " style="left:616.75px;top:554.87px;width:50.25px;height:17.47px;line-height:17.47px;text-align:right;">28,637</div>
<div class="t " style="left:673.00px;top:554.87px;width:50.25px;height:17.47px;line-height:17.47px;text-align:right;">26,747</div>
<div class="t " style="left:729.25px;top:554.87px;width:50.25px;height:17.47px;line-height:17.47px;text-align:right;">25,498</div>
<div class="t " style="left:785.50px;top:554.87px;width:50.25px;height:17.47px;line-height:17.47px;text-align:right;">25,294</div>
<div class="t " style="left:841.75px;top:554.87px;width:50.25px;height:17.47px;line-height:17.47px;text-align:right;">31,012</div>
<div class="t " style="left:898.00px;top:554.87px;width:50.25px;height:17.47px;line-height:17.47px;text-align:right;">27,577</div>
<div class="t " style="left:954.25px;top:554.87px;width:50.25px;height:17.47px;line-height:17.47px;text-align:right;">24,103</div>
<div class="t " style="left:1010.50px;top:554.87px;width:50.25px;height:17.47px;line-height:17.47px;text-align:right;">23,959</div>
<div class="t " style="left:1066.75px;top:554.87px;width:50.25px;height:17.47px;line-height:17.47px;text-align:right;">22,949</div>
<div class="t b" style="left:1121.00px;top:554.87px;width:59.50px;height:17.47px;line-height:17.47px;text-align:right;">349,386</div>
<div style="left:383.00px;top:0.00px;width:1.00px;height:89.00px;background:#72a17f"></div>
<div style="left:383.00px;top:89.00px;width:1.00px;height:484.00px;background:#8c8c8c"></div>
</body></html>
